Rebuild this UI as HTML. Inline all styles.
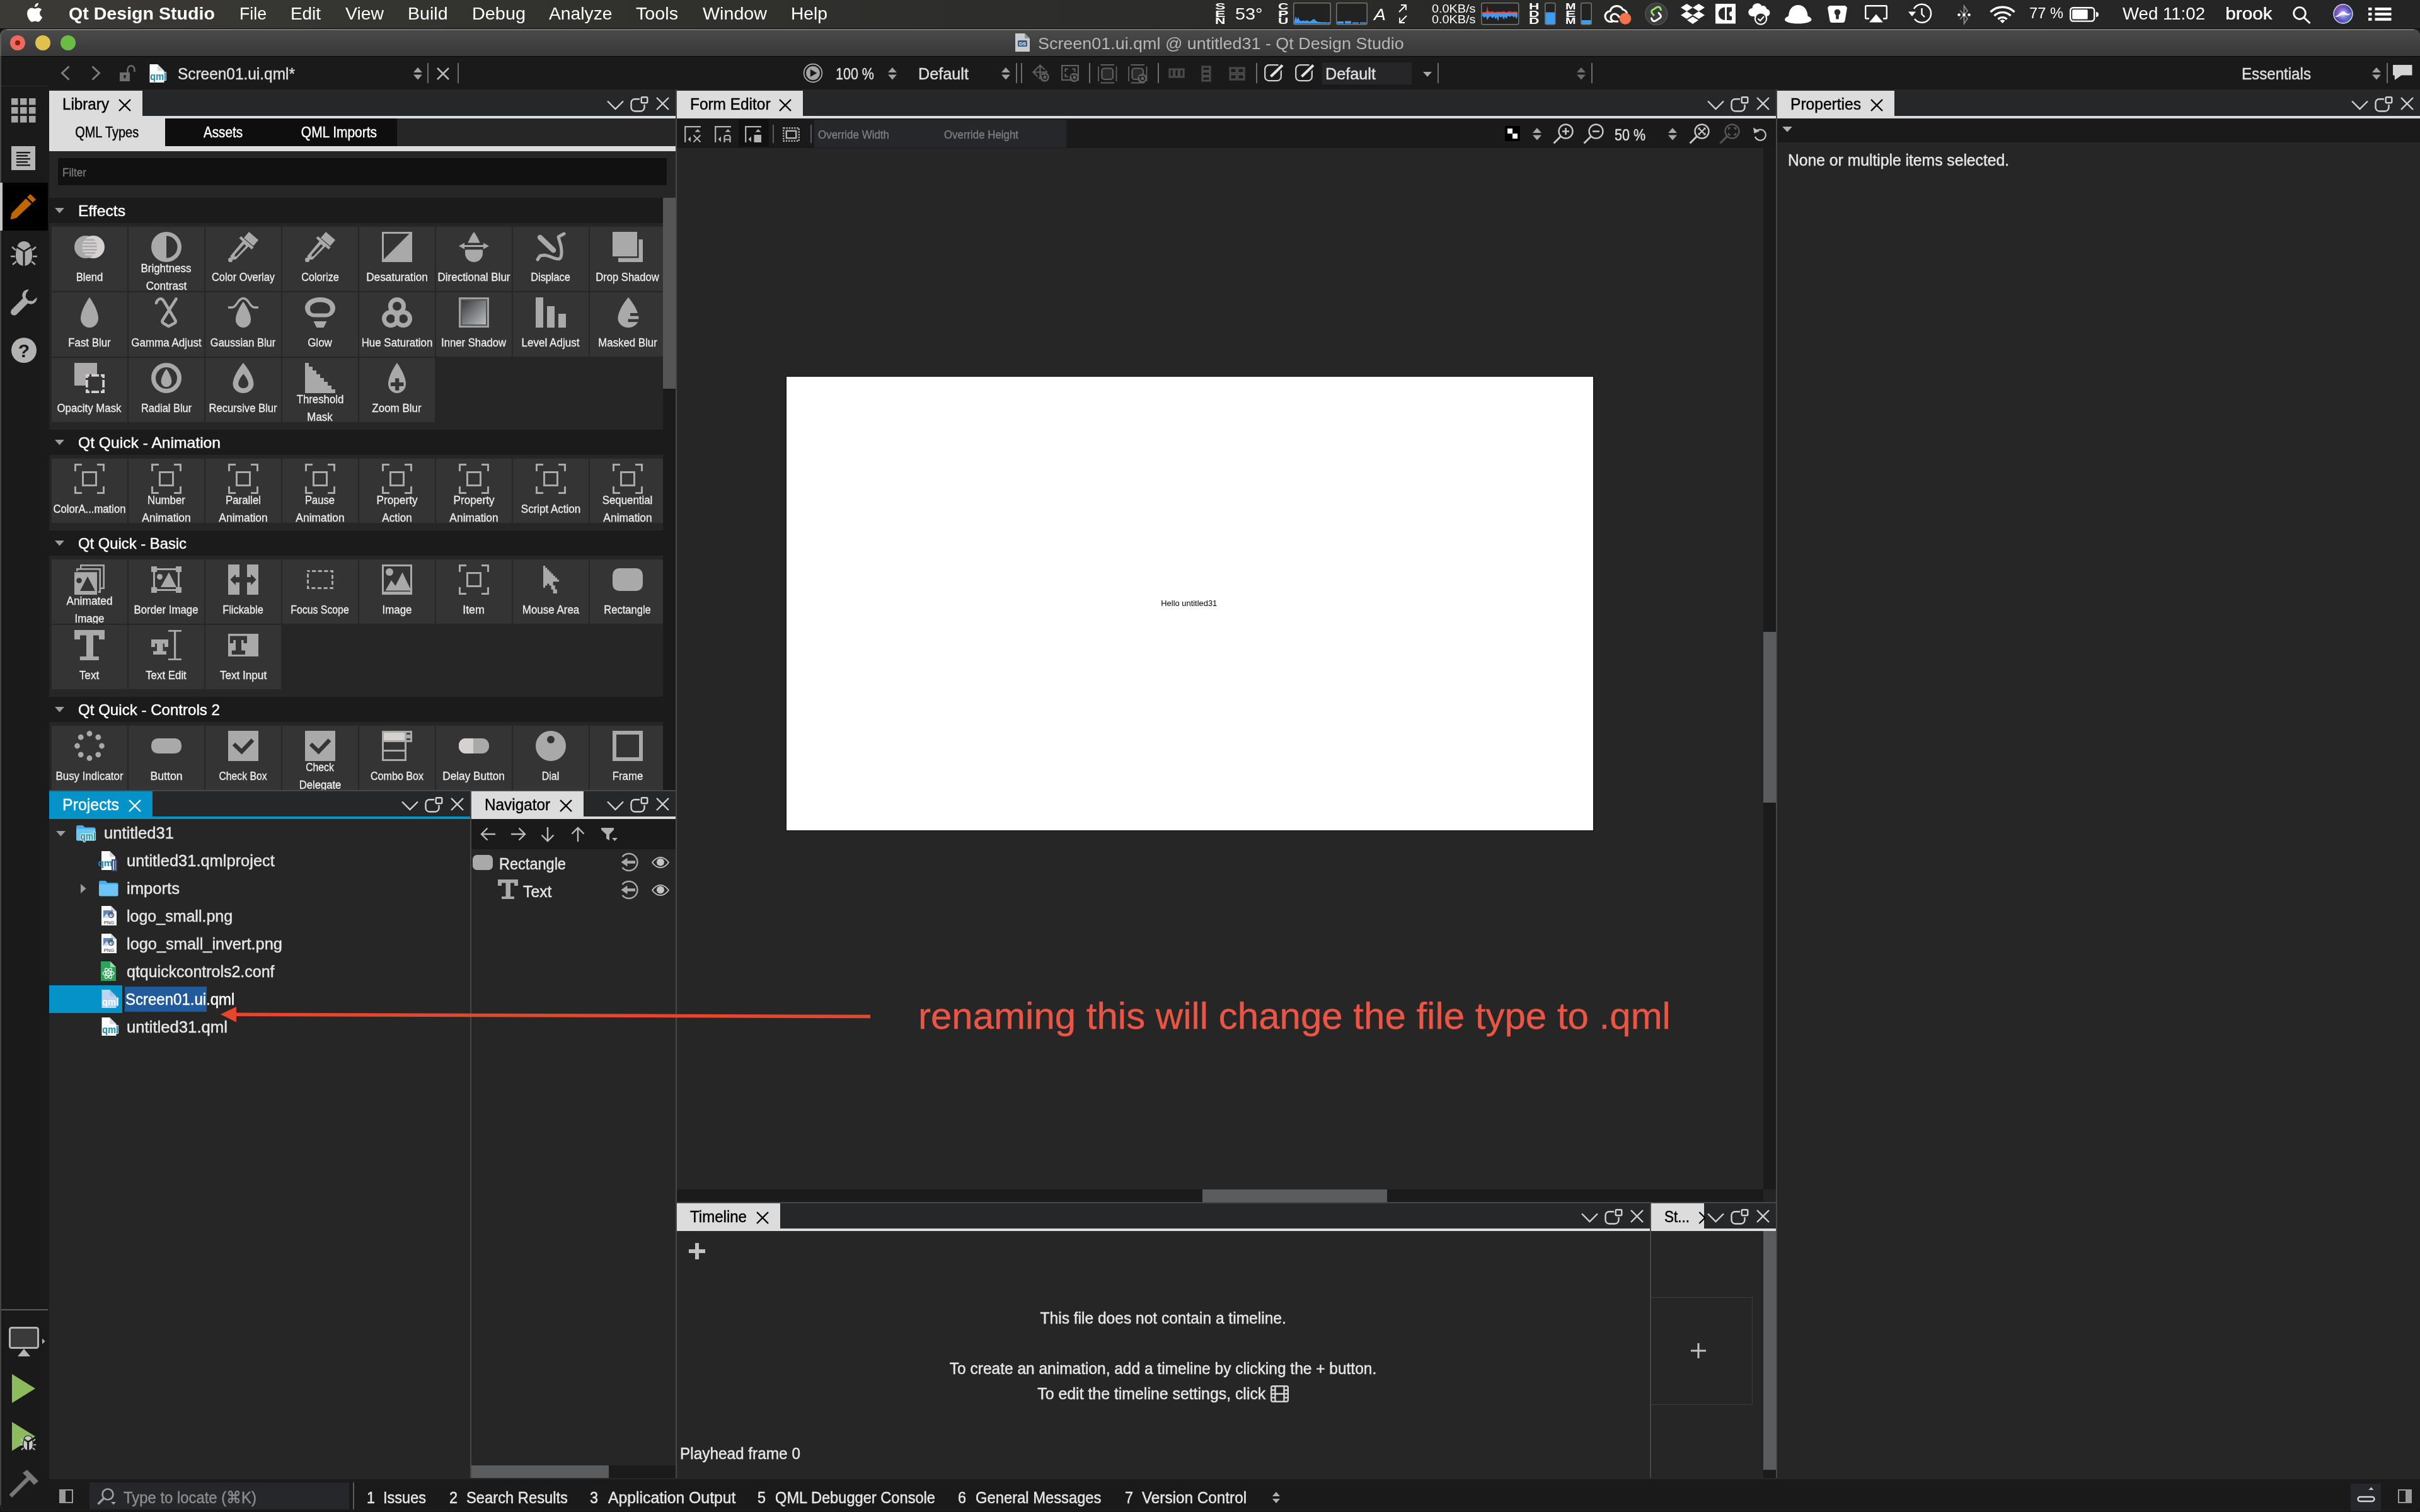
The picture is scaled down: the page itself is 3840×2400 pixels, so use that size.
<!DOCTYPE html>
<html><head><meta charset="utf-8"><title>Qt Design Studio</title>
<style>
html,body{margin:0;padding:0;background:#161616;}
body{width:3840px;height:2400px;position:relative;overflow:hidden;font-family:"Liberation Sans",sans-serif;}
div,span,svg{position:absolute;}
span{display:block;}
svg{overflow:visible;}
svg text{font-family:"Liberation Sans",sans-serif;}
</style></head>
<body>
<svg width="0" height="0" style="left:0;top:0"><defs><filter id="gb" x="-20%" y="-20%" width="140%" height="140%"><feGaussianBlur stdDeviation="0.700"/></filter></defs></svg>
<div style="left:0px;top:46px;width:3840px;height:2353px;background:#262626;border-radius:11px 11px 9px 9px;"></div>
<div style="left:0px;top:0px;width:3840px;height:46px;background:linear-gradient(90deg,#3b3a37 0%,#33332f 18%,#2d2e2b 40%,#2a2a29 60%,#272727 80%,#242424 100%);"></div>
<div style="left:0px;top:45px;width:3840px;height:1px;background:#0c0c0c;"></div>
<svg style="left:42px;top:3.6px;" width="27" height="32.6" viewBox="0 0 28 33"><path fill="#fff" d="M19.6,0 c0.2,1.8 -0.5,3.5 -1.5,4.8 c-1.1,1.3 -2.8,2.3 -4.5,2.1 c-0.2,-1.7 0.6,-3.5 1.6,-4.6 C16.3,1 18.2,0.1 19.6,0 Z M25.3,11.3 c-0.2,0.1 -3.4,2 -3.4,5.9 c0,4.6 4,6.2 4.1,6.2 c0,0.1 -0.6,2.2 -2.1,4.3 c-1.3,1.9 -2.6,3.7 -4.7,3.8 c-2,0 -2.7,-1.2 -5,-1.2 c-2.3,0 -3.1,1.2 -5,1.2 c-2,0.1 -3.5,-2 -4.8,-3.9 C1.7,23.800 -0.300,17 2.400,12.300 C3.800,10 6.200,8.500 8.800,8.500 c2,0 3.800,1.300 5,1.300 c1.200,0 3.400,-1.600 5.800,-1.400 C20.600,8.500 23.400,8.900 25.300,11.300 Z"/></svg>
<span style="top:8px;font-size:28px;line-height:28px;color:#fff;white-space:pre;font-weight:bold;left:109px;transform-origin:0 50%;transform:scaleX(1.021);">Qt Design Studio</span>
<span style="top:8.5px;font-size:27px;line-height:27px;color:#fff;white-space:pre;left:379.6px;transform-origin:0 50%;transform:scaleX(0.988);">File</span>
<span style="top:8.5px;font-size:27px;line-height:27px;color:#fff;white-space:pre;left:461px;transform-origin:0 50%;transform:scaleX(1.032);">Edit</span>
<span style="top:8.5px;font-size:27px;line-height:27px;color:#fff;white-space:pre;left:547.5px;transform-origin:0 50%;transform:scaleX(1.051);">View</span>
<span style="top:8.5px;font-size:27px;line-height:27px;color:#fff;white-space:pre;left:647px;transform-origin:0 50%;transform:scaleX(1.058);">Build</span>
<span style="top:8.5px;font-size:27px;line-height:27px;color:#fff;white-space:pre;left:748.5px;transform-origin:0 50%;transform:scaleX(1.068);">Debug</span>
<span style="top:8.5px;font-size:27px;line-height:27px;color:#fff;white-space:pre;left:871px;transform-origin:0 50%;transform:scaleX(1.046);">Analyze</span>
<span style="top:8.5px;font-size:27px;line-height:27px;color:#fff;white-space:pre;left:1009.4px;transform-origin:0 50%;transform:scaleX(1.063);">Tools</span>
<span style="top:8.5px;font-size:27px;line-height:27px;color:#fff;white-space:pre;left:1115px;transform-origin:0 50%;transform:scaleX(1.062);">Window</span>
<span style="top:8.5px;font-size:27px;line-height:27px;color:#fff;white-space:pre;left:1255px;transform-origin:0 50%;transform:scaleX(1.044);">Help</span>
<span style="top:2.5px;font-size:14px;line-height:14px;color:#ffffff;white-space:pre;font-weight:bold;left:1928px;transform-origin:0 50%;transform:scaleX(1.767);transform-origin:0 50%;">S</span>
<span style="top:14.5px;font-size:14px;line-height:14px;color:#ffffff;white-space:pre;font-weight:bold;left:1928px;transform-origin:0 50%;transform:scaleX(1.767);transform-origin:0 50%;">E</span>
<span style="top:26.2px;font-size:14px;line-height:14px;color:#ffffff;white-space:pre;font-weight:bold;left:1928px;transform-origin:0 50%;transform:scaleX(1.632);transform-origin:0 50%;">N</span>
<span style="top:10px;font-size:25px;line-height:25px;color:#ffffff;white-space:pre;left:1959.5px;transform-origin:0 50%;transform:scaleX(1.151);">53°</span>
<span style="top:2.5px;font-size:14px;line-height:14px;color:#ffffff;white-space:pre;font-weight:bold;left:2028px;transform-origin:0 50%;transform:scaleX(1.632);transform-origin:0 50%;">C</span>
<span style="top:14.5px;font-size:14px;line-height:14px;color:#ffffff;white-space:pre;font-weight:bold;left:2028px;transform-origin:0 50%;transform:scaleX(1.767);transform-origin:0 50%;">P</span>
<span style="top:26.2px;font-size:14px;line-height:14px;color:#ffffff;white-space:pre;font-weight:bold;left:2028px;transform-origin:0 50%;transform:scaleX(1.632);transform-origin:0 50%;">U</span>
<svg style="left:2052px;top:4px;" width="60" height="35.5" viewBox="0 0 60 35.5"><rect x="0.750" y="0.750" width="58.5" height="34" rx="2.500" fill="#222" stroke="#777" stroke-width="1.500"/><path d="M2,33.500 L2,29 L4,22 L6,27 L8,23 L10,28 L13,29.500 L16,28.500 L19,29.500 L22,28 L25,30 L28,29.500 L31,27 L33,26 L35,28 L38,30.500 L42,31 L46,31.500 L50,31 L54,31.800 L58,31 L58,33.500 Z" fill="#3f9cf0"/></svg>
<svg style="left:2120px;top:4px;" width="50" height="35.5" viewBox="0 0 50 35.5"><rect x="0.750" y="0.750" width="48.5" height="34" rx="2.500" fill="#222" stroke="#777" stroke-width="1.500"/><g fill="#3f9cf0"><rect x="2" y="30" width="10" height="3.500"/><rect x="14" y="29.500" width="10" height="4"/><rect x="26" y="31.500" width="10" height="2"/><rect x="38" y="31.500" width="10" height="2"/></g></svg>
<span style="top:9.5px;font-size:26px;line-height:26px;color:#ffffff;white-space:pre;font-style:italic;left:2180px;transform-origin:0 50%;transform:scaleX(1.095);">A</span>
<svg style="left:2219px;top:7px;" width="14" height="30" viewBox="0 0 14 30"><g fill="none" stroke="#fff" stroke-width="1.800"><path d="M1,12 L12,1 M4,1 H12 V9"/><path d="M13,18 L2,29 M2,21 V29 H10"/></g></svg>
<span style="top:5.75px;font-size:17.5px;line-height:17.5px;color:#ffffff;white-space:pre;left:2271.5px;transform-origin:0 50%;transform:scaleX(1.134);">0.0KB/s</span>
<span style="top:23.45px;font-size:17.5px;line-height:17.5px;color:#ffffff;white-space:pre;left:2271.5px;transform-origin:0 50%;transform:scaleX(1.134);">0.0KB/s</span>
<svg style="left:2350px;top:4px;" width="60.5" height="35.5" viewBox="0 0 60.5 35.5"><rect x="0.750" y="0.750" width="59.0" height="34" rx="2.500" fill="#222" stroke="#777" stroke-width="1.500"/><path d="M2,17 L2,15 L6,15.500 L9,14 L10,4 L11,13 L14,15 L18,14 L22,15.500 L27,14.500 L32,15 L36,14 L40,15.500 L45,14 L50,15 L54,14.500 L58,15 L58,17 Z" fill="#e8483c"/><path d="M2,17 L58,17 L58,22 L56,26 L54,21 L52,24 L49,20.500 L46,23 L43,21 L40,26 L38,22 L36,27.500 L34,22 L31,24 L29,21 L27,30 L25,23 L23,26.500 L21,22 L18,25 L15,21.500 L12,24 L10,28 L8,22 L5,24 L2,21 Z" fill="#3f9cf0"/></svg>
<span style="top:2.5px;font-size:14px;line-height:14px;color:#ffffff;white-space:pre;font-weight:bold;left:2426px;transform-origin:0 50%;transform:scaleX(1.632);transform-origin:0 50%;">H</span>
<span style="top:14.5px;font-size:14px;line-height:14px;color:#ffffff;white-space:pre;font-weight:bold;left:2426px;transform-origin:0 50%;transform:scaleX(1.632);transform-origin:0 50%;">D</span>
<span style="top:26.2px;font-size:14px;line-height:14px;color:#ffffff;white-space:pre;font-weight:bold;left:2426px;transform-origin:0 50%;transform:scaleX(1.632);transform-origin:0 50%;">D</span>
<svg style="left:2450.5px;top:4px;" width="17.5" height="35.5" viewBox="0 0 17.5 35.5"><rect x="0.750" y="0.750" width="16" height="34" rx="2.500" fill="#222" stroke="#777" stroke-width="1.500"/><rect x="1.500" y="15.500" width="14.500" height="18.500" fill="#3f9cf0"/></svg>
<span style="top:2.5px;font-size:14px;line-height:14px;color:#ffffff;white-space:pre;font-weight:bold;left:2483.5px;transform-origin:0 50%;transform:scaleX(1.415);transform-origin:0 50%;">M</span>
<span style="top:14.5px;font-size:14px;line-height:14px;color:#ffffff;white-space:pre;font-weight:bold;left:2483.5px;transform-origin:0 50%;transform:scaleX(1.767);transform-origin:0 50%;">E</span>
<span style="top:26.2px;font-size:14px;line-height:14px;color:#ffffff;white-space:pre;font-weight:bold;left:2483.5px;transform-origin:0 50%;transform:scaleX(1.415);transform-origin:0 50%;">M</span>
<svg style="left:2508px;top:4px;" width="18" height="35.5" viewBox="0 0 18 35.5"><rect x="0.750" y="0.750" width="16.500" height="34" rx="2.500" fill="#222" stroke="#777" stroke-width="1.500"/><rect x="1.500" y="28" width="15" height="6" fill="#3f9cf0"/></svg>
<svg style="left:2546px;top:9px;" width="46" height="30" viewBox="0 0 46 30"><g fill="none" stroke="#fff" stroke-width="3.200"><path d="M13,25.500 H10 a8.500,8.500 0 0 1 -1,-17 a11,11 0 0 1 20,-2.500 a9,9 0 0 1 7,9"/><path d="M22,25 H16 a6,6 0 0 1 0,-12 c4,0 6,3 8,6"/></g><circle cx="33" cy="20.500" r="9.300" fill="#f4734a"/></svg>
<svg style="left:2610px;top:3.5px;" width="36.5" height="36.5" viewBox="0 0 36.5 36.5"><circle cx="18.250" cy="18.250" r="17.500" fill="#3d3d3d" stroke="#5a5a5a" stroke-width="1.200"/><path d="M14,20 L11.500,17 C10,15 10.500,13 12,12 L19,7.500 C21,6.300 23.500,7 24.500,9 L25.500,11.500" fill="none" stroke="#8fe36a" stroke-width="3" stroke-linecap="round"/><path d="M22,16.500 L24.500,19.500 C26,21.500 25.500,23.500 24,24.500 L17,29 C15,30.200 12.500,29.500 11.500,27.500 L10.500,25" fill="none" stroke="#fff" stroke-width="3" stroke-linecap="round"/></svg>
<svg style="left:2667px;top:6px;" width="38" height="32" viewBox="0 0 38 32"><g fill="#fff"><path d="M9.500,0 L19,6 L9.500,12 L0,6 Z"/><path d="M28.500,0 L38,6 L28.500,12 L19,6 Z"/><path d="M9.500,12 L19,18 L9.500,24 L0,18 Z"/><path d="M28.500,12 L38,18 L28.500,24 L19,18 Z"/><path d="M19,20.500 L28,26 L19,32 L10,26 Z"/></g></svg>
<svg style="left:2722px;top:6px;" width="32" height="31.5" viewBox="0 0 32 31.5"><rect width="32" height="31.500" fill="#fff"/><path d="M15,5.500 V26 A10.250,10.250 0 0 1 15,5.500 Z" fill="#2b2b2b"/><path d="M18,5.500 H26 V12 A4,4 0 0 0 26,20 V26 H18 Z" fill="#2b2b2b"/></svg>
<svg style="left:2774px;top:4px;" width="37" height="36" viewBox="0 0 37 36"><path d="M8.500,22 H7 a6.500,6.500 0 0 1 -0.500,-13 a8,8 0 0 1 15,-3.500 a6,6 0 0 1 8,5 a5.800,5.800 0 0 1 1.500,11 Z" fill="#fff"/><circle cx="20" cy="25.500" r="9.200" fill="#2d2d2b" stroke="#fff" stroke-width="2.200"/><path d="M15.500,25.500 L19,29 L25,22" fill="none" stroke="#fff" stroke-width="2.200"/></svg>
<svg style="left:2832px;top:7.5px;" width="42.5" height="29.5" viewBox="0 0 42.5 29.5"><path d="M21.250,0 C31,0 36,8 36.500,17.500 C40,19 42.500,21 42.500,23 C42.500,27 33,29.500 21.250,29.500 C9.500,29.500 0,27 0,23 C0,21 2.500,19 6,17.500 C6.500,8 11.500,0 21.250,0 Z" fill="#fff"/></svg>
<svg style="left:2900px;top:9px;" width="31" height="27" viewBox="0 0 31 27"><path d="M3,0 H28 L31,3 L27.500,24 C27,26 25.500,27 24,27 H7 C5.500,27 4,26 3.500,24 L0,3 Z" fill="#fff"/><circle cx="15.500" cy="10.500" r="4.800" fill="#2b2b2b"/><rect x="13.200" y="12" width="4.600" height="9.500" rx="1.500" fill="#2b2b2b"/></svg>
<svg style="left:2958.5px;top:8px;" width="36" height="28" viewBox="0 0 36 28"><path d="M7,21.500 H2.500 a1.300,1.300 0 0 1 -1.300,-1.300 V2.500 a1.300,1.300 0 0 1 1.300,-1.300 H33.500 a1.300,1.300 0 0 1 1.300,1.300 V20.200 a1.300,1.300 0 0 1 -1.300,1.300 H29" fill="none" stroke="#fff" stroke-width="2.400"/><path d="M18,14.500 L29,27.500 H7 Z" fill="#fff"/></svg>
<svg style="left:3028px;top:6px;" width="38" height="32" viewBox="0 0 38 32"><path d="M8.500,9 A14.500,14.500 0 1 1 9.500,25" fill="none" stroke="#fff" stroke-width="2.400" transform="translate(0.500,-1)"/><path d="M0,12.500 H12 L6,20 Z" fill="#fff"/><path d="M21.500,7 V16.500 L26,21" fill="none" stroke="#fff" stroke-width="2.400"/></svg>
<svg style="left:3105px;top:7.5px;" width="24" height="31" viewBox="0 0 24 31"><path d="M5,8.500 L17,21.500 L11.500,29.500 V1.500 L17,9.500 L5,22.500" fill="none" stroke="#8a8a8a" stroke-width="1.800"/><circle cx="3.500" cy="15.500" r="2.300" fill="#fff"/><circle cx="11.500" cy="15.500" r="2.300" fill="#fff"/><circle cx="19.500" cy="15.500" r="2.300" fill="#fff"/></svg>
<svg style="left:3156.5px;top:7.5px;" width="41" height="29" viewBox="0 0 41 29"><g fill="none" stroke="#fff" stroke-width="3.400"><path d="M1.500,11 A27,27 0 0 1 39.500,11"/><path d="M7.500,17 A18.500,18.500 0 0 1 33.500,17"/><path d="M13.500,22.500 A10,10 0 0 1 27.500,22.500"/></g><path d="M20.500,29 L16.500,24.800 A5.800,5.800 0 0 1 24.500,24.800 Z" fill="#fff"/></svg>
<span style="top:9.75px;font-size:23.5px;line-height:23.5px;color:#ffffff;white-space:pre;left:3220px;transform-origin:0 50%;transform:scaleX(1.008);">77 %</span>
<svg style="left:3284px;top:10.5px;" width="46" height="24" viewBox="0 0 46 24"><rect x="1.200" y="1.200" width="38" height="21.400" rx="4.500" fill="none" stroke="#fff" stroke-width="2.400"/><rect x="4.200" y="4.200" width="24.500" height="15.400" rx="1.500" fill="#fff"/><path d="M42,8 a4,4 0 0 1 0,8 Z" fill="#fff"/></svg>
<span style="top:8.25px;font-size:27.5px;line-height:27.5px;color:#ffffff;white-space:pre;left:3368px;transform-origin:0 50%;transform:scaleX(1.004);">Wed 11:02</span>
<span style="top:8.25px;font-size:27.5px;line-height:27.5px;color:#ffffff;white-space:pre;left:3531px;transform-origin:0 50%;transform:scaleX(1.083);text-shadow:0.400px 0 0 #fff;">brook</span>
<svg style="left:3638px;top:9.5px;" width="29" height="28" viewBox="0 0 29 28"><circle cx="11" cy="11" r="9.300" fill="none" stroke="#fff" stroke-width="2.800"/><path d="M17.500,17.500 L27.500,27" stroke="#fff" stroke-width="3" fill="none"/></svg>
<svg style="left:3702px;top:6px;" width="32" height="32" viewBox="0 0 32 32"><defs><radialGradient id="sg" cx="0.500" cy="0.500" r="0.500"><stop offset="0" stop-color="#f4f6ff"/><stop offset="0.350" stop-color="#9b8fe8"/><stop offset="0.700" stop-color="#5a4fb8"/><stop offset="1" stop-color="#3b3a8a"/></radialGradient><linearGradient id="sg2" x1="0" y1="0" x2="1" y2="1"><stop offset="0" stop-color="#e0559f" stop-opacity="0.900"/><stop offset="0.500" stop-color="#6a5fd0" stop-opacity="0"/><stop offset="1" stop-color="#34c9d8" stop-opacity="0.900"/></linearGradient></defs><circle cx="16" cy="16" r="15.500" fill="url(#sg)"/><circle cx="16" cy="16" r="15.500" fill="url(#sg2)"/><path d="M3,20 C10,18 12,12 16,12 C20,12 22,19 29,14 C24,22 20,17 16,17 C12,17 9,23 3,20 Z" fill="#fff" opacity="0.850"/><circle cx="16" cy="16" r="15" fill="none" stroke="#d8d8e8" stroke-width="1.400"/></svg>
<svg style="left:3757.5px;top:11.5px;" width="37" height="21" viewBox="0 0 37 21"><g fill="#fff"><rect x="0" y="0" width="5.500" height="4.400"/><rect x="10.500" y="0" width="26" height="4.400"/><rect x="0" y="8.200" width="5.500" height="4.400"/><rect x="10.500" y="8.200" width="26" height="4.400"/><rect x="0" y="16.400" width="5.500" height="4.400"/><rect x="10.500" y="16.400" width="26" height="4.400"/></g></svg>
<div style="left:0px;top:46px;width:3840px;height:44px;background:#5c5c5c;border-radius:11px 11px 0 0;"></div>
<div style="left:2px;top:46px;width:3838px;height:43px;background:linear-gradient(180deg,#4a4a4a 0%,#424242 45%,#383838 100%);border-radius:10px 10px 0 0;"></div>
<div style="left:11px;top:46px;width:3819px;height:1.5px;background:#767676;"></div>
<div style="left:2px;top:89px;width:3838px;height:1.4px;background:#050505;"></div>
<div style="left:16px;top:55.5px;width:24px;height:24px;border-radius:50%;background:#ee6a5e;"></div>
<div style="left:24px;top:63.5px;width:8px;height:8px;border-radius:50%;background:#8e1b12;"></div>
<div style="left:56px;top:55.5px;width:24px;height:24px;border-radius:50%;background:#e2c04d;"></div>
<div style="left:96px;top:55.5px;width:24px;height:24px;border-radius:50%;background:#69bd45;"></div>
<svg style="left:1611px;top:53px;" width="23" height="29" viewBox="0 0 23 29"><path d="M0,0 H15 L23,8 V29 H0 Z" fill="#c9cbcf"/><path d="M15,0 V8 H23 Z" fill="#8f9297"/><rect x="4" y="11" width="15" height="10" rx="1.5" fill="#3a5f86"/><text x="11.500" y="19" font-size="8" font-weight="bold" text-anchor="middle" fill="#dfe6ee" font-family="Liberation Sans">DS</text></svg>
<span style="top:56px;font-size:26px;line-height:26px;color:#b6b6b6;white-space:pre;left:1647px;transform-origin:0 50%;transform:scaleX(1.035);">Screen01.ui.qml @ untitled31 - Qt Design Studio</span>
<div style="left:2px;top:90.4px;width:3838px;height:51.6px;background:#1a1a1a;"></div>
<svg style="left:97px;top:104px;" width="14" height="24" viewBox="0 0 14 24"><path d="M12.5,1.5 L1.5,12.0 L12.5,22.5" fill="none" stroke="#7d7d7d" stroke-width="3"/></svg>
<svg style="left:145px;top:104px;" width="14" height="24" viewBox="0 0 14 24"><path d="M1.5,1.5 L12.5,12.0 L1.5,22.5" fill="none" stroke="#7d7d7d" stroke-width="3"/></svg>
<svg style="left:190px;top:103px;" width="26" height="26" viewBox="0 0 26 26"><rect x="0" y="12" width="16" height="14" fill="#6f6f6f"/><path d="M12.5,12 V7 a5.5,5.5 0 0 1 11,0 V11" fill="none" stroke="#6f6f6f" stroke-width="2.4"/><circle cx="8" cy="18" r="2" fill="#1a1a1a"/><rect x="7.200" y="18" width="1.600" height="4" fill="#1a1a1a"/></svg>
<svg style="left:237px;top:101.5px;" width="30" height="34" viewBox="0 0 30 34"><path d="M0.500,0 H13 L23.500,10.500 V29 H0.500 Z" fill="#fdfdfd"/><path d="M13,0 L23.500,10.500 H13 Z" fill="#d5d9de"/><text x="14" y="25.300" font-size="17" font-weight="bold" text-anchor="middle" fill="#1b8ca8" stroke="#ffffff" stroke-width="1.800" paint-order="stroke" stroke-linejoin="round" font-family="Liberation Sans" textLength="26" lengthAdjust="spacingAndGlyphs">qml</text></svg>
<span style="top:104px;font-size:26px;line-height:26px;color:#dedede;white-space:pre;-webkit-text-stroke:0.462px #dedede;left:282px;transform-origin:0 50%;transform:scaleX(0.939);">Screen01.ui.qml*</span>
<svg style="left:656px;top:107.2px;" width="14" height="19.6" viewBox="0 0 14 19.6"><path d="M0,8 L7.0,0 L14,8 Z M0,11.6 L7.0,19.6 L14,11.6 Z" fill="#a0a0a0"/></svg>
<div style="left:678px;top:100px;width:2px;height:32px;background:#6e6e6e;"></div>
<svg style="left:693px;top:107px;" width="20" height="20" viewBox="0 0 20 20"><path d="M1,1 L19,19 M19,1 L1,19" stroke="#b8b8b8" stroke-width="2.6" fill="none"/></svg>
<div style="left:726px;top:100px;width:2px;height:32px;background:#6e6e6e;"></div>
<svg style="left:1274px;top:99.8px;" width="32" height="32" viewBox="0 0 32 32"><circle cx="16" cy="16" r="14.400" fill="none" stroke="#b2b2b2" stroke-width="1.700"/><circle cx="16" cy="16" r="10.900" fill="#a4a4a4"/><path d="M11.800,10 L22.400,16 L11.800,22 Z" fill="#1a1a1a"/></svg>
<span style="top:104px;font-size:26px;line-height:26px;color:#dedede;white-space:pre;-webkit-text-stroke:0.462px #dedede;left:1326px;transform-origin:0 50%;transform:scaleX(0.827);">100 %</span>
<svg style="left:1409px;top:107.2px;" width="14" height="19.6" viewBox="0 0 14 19.6"><path d="M0,8 L7.0,0 L14,8 Z M0,11.6 L7.0,19.6 L14,11.6 Z" fill="#a0a0a0"/></svg>
<span style="top:104px;font-size:26px;line-height:26px;color:#dedede;white-space:pre;-webkit-text-stroke:0.462px #dedede;left:1457px;transform-origin:0 50%;transform:scaleX(0.971);">Default</span>
<svg style="left:1589px;top:107.2px;" width="14" height="19.6" viewBox="0 0 14 19.6"><path d="M0,8 L7.0,0 L14,8 Z M0,11.6 L7.0,19.6 L14,11.6 Z" fill="#a0a0a0"/></svg>
<div style="left:1612px;top:100px;width:2px;height:32px;background:#6e6e6e;"></div>
<div style="left:1620px;top:100px;width:2px;height:32px;background:#6e6e6e;"></div>
<svg style="left:1637px;top:101px;" width="30" height="30" viewBox="0 0 30 30"><g fill="none" stroke="#606060" stroke-width="2.200"><path d="M13.500,24 V2.500 M8,8 L13.500,2.500 L19,8 M25,13.500 H2.500 M8,8 L2.500,13.500 L8,19"/><path d="M19,8 L24.500,13.500 M8,19 L13.500,24.500" stroke-dasharray="2.500 2"/></g><circle cx="20.5" cy="21.5" r="7.300" fill="#606060"/><path d="M17.3,21.0 A3.600,3.600 0 1 0 20.5,17.9" fill="none" stroke="#1a1a1a" stroke-width="1.700"/><path d="M14.9,18.1 L20.3,17.7 L17.5,22.7 Z" fill="#1a1a1a"/></svg>
<svg style="left:1684px;top:103px;" width="30" height="30" viewBox="0 0 30 30"><g fill="none" stroke="#606060" stroke-width="2.200"><rect x="1.100" y="1.100" width="25.800" height="22.800"/><path d="M6.500,11 V6.500 H11 M17,6.500 H21.500 V11 M6.500,14 V18.500 H11"/></g><circle cx="20.5" cy="20" r="7.300" fill="#606060"/><path d="M17.3,19.5 A3.600,3.600 0 1 0 20.5,16.4" fill="none" stroke="#1a1a1a" stroke-width="1.700"/><path d="M14.9,16.6 L20.3,16.2 L17.5,21.2 Z" fill="#1a1a1a"/></svg>
<div style="left:1728px;top:100px;width:2px;height:32px;background:#6e6e6e;"></div>
<svg style="left:1742px;top:101.5px;" width="31" height="31" viewBox="0 0 31 31"><g fill="none" stroke="#606060" stroke-width="1.800"><path d="M4.500,1 H26 M4.500,29.500 H26 M1,3.500 V27 M29.500,3.500 V27"/><rect x="6.500" y="6.500" width="17.500" height="17.500" rx="4" fill="#2a2a2a" stroke-width="2.200"/></g></svg>
<svg style="left:1790px;top:101.5px;" width="31" height="31" viewBox="0 0 31 31"><g fill="none" stroke="#606060" stroke-width="1.800"><path d="M4.500,1 H26 M4.500,29.500 H26 M1,3.500 V27 M29.500,3.500 V27"/><rect x="6.500" y="6.500" width="17.500" height="17.500" rx="4" fill="#2a2a2a" stroke-width="2.200"/></g><circle cx="22.5" cy="22.5" r="7.300" fill="#606060"/><path d="M19.3,22.0 A3.600,3.600 0 1 0 22.5,18.9" fill="none" stroke="#1a1a1a" stroke-width="1.700"/><path d="M16.9,19.1 L22.3,18.7 L19.5,23.7 Z" fill="#1a1a1a"/></svg>
<div style="left:1837px;top:100px;width:2px;height:32px;background:#6e6e6e;"></div>
<svg style="left:1854px;top:108px;" width="26" height="16" viewBox="0 0 26 16"><rect width="26" height="16" fill="#3d3d3d"/><g fill="#1c1c1c" stroke="#565656" stroke-width="1.300"><rect x="2.600" y="2.600" width="5.200" height="10.800"/><rect x="10.400" y="2.600" width="5.200" height="10.800"/><rect x="18.200" y="2.600" width="5.200" height="10.800"/></g></svg>
<svg style="left:1906px;top:104px;" width="16" height="26" viewBox="0 0 16 26"><rect width="16" height="26" fill="#3d3d3d"/><g fill="#1c1c1c" stroke="#565656" stroke-width="1.300"><rect x="2.600" y="2.600" width="10.800" height="5.200"/><rect x="2.600" y="10.400" width="10.800" height="5.200"/><rect x="2.600" y="18.200" width="10.800" height="5.200"/></g></svg>
<svg style="left:1950px;top:106px;" width="26" height="22" viewBox="0 0 26 22"><rect width="26" height="22" fill="#3d3d3d"/><g fill="#1c1c1c" stroke="#565656" stroke-width="1.300"><rect x="2.600" y="2.600" width="8.800" height="6.800"/><rect x="14.600" y="2.600" width="8.800" height="6.800"/><rect x="2.600" y="12.600" width="8.800" height="6.800"/><rect x="14.600" y="12.600" width="8.800" height="6.800"/></g></svg>
<div style="left:1993px;top:100px;width:2px;height:32px;background:#6e6e6e;"></div>
<svg style="left:2006px;top:100px;" width="31" height="30" viewBox="0 0 31 30"><rect x="1.200" y="3.200" width="25.600" height="25" rx="6.500" fill="none" stroke="#cdcdcd" stroke-width="2.300"/><path d="M10.500,21.500 L29.500,3" stroke="#1a1a1a" stroke-width="9" fill="none"/><path d="M10.500,21.500 L29,3.500" stroke="#e2e2e2" stroke-width="4.200" fill="none"/></svg>
<svg style="left:2054.5px;top:100px;" width="31" height="30" viewBox="0 0 31 30"><rect x="1.200" y="3.200" width="25.600" height="25" rx="6.500" fill="none" stroke="#cdcdcd" stroke-width="2.300"/><path d="M10.500,21.500 L29.500,3" stroke="#1a1a1a" stroke-width="9" fill="none"/><path d="M10.500,21.500 L29,3.500" stroke="#e2e2e2" stroke-width="4.200" fill="none"/></svg>
<div style="left:2098px;top:99px;width:142px;height:35px;background:#262628;"></div>
<span style="top:104px;font-size:26px;line-height:26px;color:#dedede;white-space:pre;-webkit-text-stroke:0.462px #dedede;left:2103px;transform-origin:0 50%;transform:scaleX(0.971);">Default</span>
<svg style="left:2258px;top:114px;" width="14" height="8" viewBox="0 0 14 8"><path d="M0,0 H14 L7,8 Z" fill="#a8a8a8"/></svg>
<div style="left:2281px;top:100px;width:2px;height:32px;background:#6e6e6e;"></div>
<svg style="left:2502px;top:107.2px;" width="14" height="19.6" viewBox="0 0 14 19.6"><path d="M0,8 L7.0,0 L14,8 Z M0,11.6 L7.0,19.6 L14,11.6 Z" fill="#6c6c6c"/></svg>
<div style="left:2525px;top:100px;width:2px;height:32px;background:#6e6e6e;"></div>
<span style="top:104px;font-size:26px;line-height:26px;color:#dedede;white-space:pre;-webkit-text-stroke:0.462px #dedede;left:3557px;transform-origin:0 50%;transform:scaleX(0.928);">Essentials</span>
<svg style="left:3764px;top:107.2px;" width="14" height="19.6" viewBox="0 0 14 19.6"><path d="M0,8 L7.0,0 L14,8 Z M0,11.6 L7.0,19.6 L14,11.6 Z" fill="#a0a0a0"/></svg>
<div style="left:3787px;top:100px;width:2px;height:32px;background:#6e6e6e;"></div>
<svg style="left:3797px;top:103px;" width="30.5" height="24" viewBox="0 0 30.5 24"><path d="M0,0 H30.500 V16.500 H13.500 L3,24 L2.500,16.500 H0 Z" fill="#d4d4d4"/></svg>
<div style="left:0px;top:89px;width:2px;height:2300px;background:#444444;"></div>
<div style="left:2px;top:90.4px;width:76px;height:2308.6px;background:#1a1a1a;border-radius:0 0 0 9px;"></div>
<div style="left:2px;top:136px;width:74px;height:1px;background:#2c2c2c;"></div>
<svg style="left:18px;top:156px;" width="39" height="39" viewBox="0 0 39 39"><rect x="0" y="0" width="10.500" height="10.500" fill="#a5a5a5"/><rect x="14" y="0" width="10.500" height="10.500" fill="#a5a5a5"/><rect x="28" y="0" width="10.500" height="10.500" fill="#a5a5a5"/><rect x="0" y="14" width="10.500" height="10.500" fill="#a5a5a5"/><rect x="14" y="14" width="10.500" height="10.500" fill="#a5a5a5"/><rect x="28" y="14" width="10.500" height="10.500" fill="#a5a5a5"/><rect x="0" y="28" width="10.500" height="10.500" fill="#a5a5a5"/><rect x="14" y="28" width="10.500" height="10.500" fill="#a5a5a5"/><rect x="28" y="28" width="10.500" height="10.500" fill="#a5a5a5"/></svg>
<svg style="left:18px;top:232px;" width="38" height="38" viewBox="0 0 38 38"><rect width="38" height="38" fill="#b5b5b5"/><g fill="#1d1d1d"><rect x="8" y="9" width="22" height="2.400"/><rect x="8" y="14" width="18" height="2.400"/><rect x="8" y="19" width="22" height="2.400"/><rect x="8" y="24" width="18" height="2.400"/><rect x="8" y="29" width="22" height="2.400"/></g></svg>
<div style="left:4px;top:290px;width:72px;height:76px;background:#000;"></div>
<div style="left:0px;top:290px;width:4px;height:76px;background:#c6c6c6;"></div>
<svg style="left:16px;top:307px;" width="42" height="42" viewBox="0 0 42 42"><path d="M32,1 L41,9.500 L36,14.500 L27,6 Z M25,8 L34,16.500 L10,39 L0.500,41.500 L2.500,31.500 Z" fill="#be6600"/></svg>
<svg style="left:17px;top:383px;" width="42" height="40" viewBox="0 0 42 40"><g fill="#aaaaaa"><path d="M21,0 C27,0 30.500,4 31.500,8 L21,14.500 L10.500,8 C11.500,4 15,0 21,0 Z"/><path d="M9.500,10.500 L19.500,16.500 V39 C12,38 8,31 8,23 C8,18 8.500,14 9.500,10.500 Z"/><path d="M32.500,10.500 L22.500,16.500 V39 C30,38 34,31 34,23 C34,18 33.500,14 32.500,10.500 Z"/></g><g stroke="#aaaaaa" stroke-width="2.600" fill="none"><path d="M8,14 L2,9 M34,14 L40,9 M7,24 H0 M35,24 H42 M9,32 L3,37 M33,32 L39,37"/></g></svg>
<svg style="left:17px;top:459px;" width="42" height="42" viewBox="0 0 42 42"><path d="M29,0.500 C24,0 19.500,3 18.500,8 C18,10.500 18.500,12.500 19.500,14.500 L2,32 C-0.500,34.500 -0.300,38 1.500,40 C3.500,42 7,42.300 9.500,40 L27,22.500 C29,23.500 31.500,24 34,23.500 C39,22.500 42,17.500 41.500,13 L34.500,19 L27.500,18 L23.500,12.500 L24.500,6.500 Z" fill="#aaaaaa"/></svg>
<svg style="left:18px;top:536px;" width="40" height="40" viewBox="0 0 40 40"><circle cx="20" cy="20" r="20" fill="#b2b2b2"/><text x="20" y="31" font-size="30" font-weight="bold" text-anchor="middle" fill="#1a1a1a" font-family="Liberation Sans">?</text></svg>
<div style="left:2px;top:2078px;width:74px;height:2px;background:#5a5a5a;"></div>
<svg style="left:14px;top:2106px;" width="58" height="48" viewBox="0 0 58 48"><rect x="1.500" y="1.500" width="45" height="32" rx="3" fill="#3a3a3a" stroke="#b4b4b4" stroke-width="3"/><path d="M24,35 L34,47 H14 Z" fill="#b4b4b4"/><path d="M53,18.500 L57.500,23 L53,27.500 Z" fill="#b4b4b4"/></svg>
<svg style="left:19px;top:2181px;" width="38" height="46" viewBox="0 0 38 46"><path d="M0,0 L37,23 L0,46 Z" fill="#8cbb5e"/></svg>
<svg style="left:19px;top:2257px;" width="40" height="48" viewBox="0 0 40 48"><path d="M0,0 L37,23 L0,46 Z" fill="#8cbb5e"/><g transform="translate(13,22) scale(0.600)"><g fill="#c8c8c8" stroke="#1a1a1a" stroke-width="2"><path d="M21,0 C27,0 30.500,4 31.500,8 L21,14.500 L10.500,8 C11.500,4 15,0 21,0 Z"/><path d="M9.500,10.500 L19.500,16.500 V39 C12,38 8,31 8,23 C8,18 8.500,14 9.500,10.500 Z"/><path d="M32.500,10.500 L22.500,16.500 V39 C30,38 34,31 34,23 C34,18 33.500,14 32.500,10.500 Z"/></g><g stroke="#c8c8c8" stroke-width="3" fill="none"><path d="M8,14 L2,9 M34,14 L40,9 M7,24 H0 M35,24 H42 M9,32 L3,37 M33,32 L39,37"/></g></g></svg>
<svg style="left:14px;top:2332px;" width="48" height="46" viewBox="0 0 48 46"><path d="M29,1 L47,19 L40,25 L33,17 L5,45 L0.500,40.500 L28.500,12.500 L22,6 Z" fill="#787878"/></svg>
<div style="left:78px;top:142px;width:994px;height:42px;background:#262728;"></div>
<div style="left:78px;top:144px;width:148px;height:40px;background:#dcdcdc;"></div>
<div style="left:78px;top:184px;width:994px;height:4px;background:#dcdcdc;"></div>
<span style="top:152px;font-size:26px;line-height:26px;color:#000;white-space:pre;-webkit-text-stroke:0.462px #000;left:98.5px;transform-origin:0 50%;transform:scaleX(0.931);">Library</span>
<svg style="left:188px;top:157px;" width="20" height="20" viewBox="0 0 20 20"><path d="M1,1 L19,19 M19,1 L1,19" stroke="#000" stroke-width="2.4" fill="none"/></svg>
<svg style="left:963px;top:158.5px;" width="27" height="16" viewBox="0 0 27 16"><path d="M1,1.500 L13.500,14 L26,1.500" fill="none" stroke="#d2d2d2" stroke-width="2.400"/></svg>
<svg style="left:1000px;top:152.5px;" width="29" height="25" viewBox="0 0 29 25"><path d="M15,4.200 H7.500 a6,6 0 0 0 -6,6 V17.500 a6,6 0 0 0 6,6 H16.500 a6,6 0 0 0 6,-6 V13" fill="none" stroke="#d2d2d2" stroke-width="2.400"/><rect x="17.700" y="1.200" width="9.600" height="9" rx="1.500" fill="none" stroke="#d2d2d2" stroke-width="2.400"/></svg>
<svg style="left:1041px;top:154.3px;" width="21" height="21" viewBox="0 0 21 21"><path d="M1,1 L20,20 M20,1 L1,20" stroke="#d2d2d2" stroke-width="2.4" fill="none"/></svg>
<div style="left:78px;top:188px;width:184px;height:52px;background:#dcdcdc;"></div>
<div style="left:262px;top:188px;width:368px;height:44px;background:#0e0e0e;"></div>
<div style="left:78px;top:232px;width:994px;height:8px;background:#dcdcdc;"></div>
<span style="top:198px;font-size:24px;line-height:24px;color:#000;white-space:pre;-webkit-text-stroke:0.427px #000;left:89.309px;width:161.383px;text-align:center;transform-origin:50% 50%;transform:scaleX(0.832);">QML Types</span>
<span style="top:198px;font-size:24px;line-height:24px;color:#fff;white-space:pre;-webkit-text-stroke:0.427px #fff;left:297.988px;width:112.023px;text-align:center;transform-origin:50% 50%;transform:scaleX(0.861);">Assets</span>
<span style="top:198px;font-size:24px;line-height:24px;color:#fff;white-space:pre;-webkit-text-stroke:0.427px #fff;left:449.1px;width:177.801px;text-align:center;transform-origin:50% 50%;transform:scaleX(0.871);">QML Imports</span>
<div style="left:92px;top:251px;width:966px;height:43px;background:#111111;"></div>
<span style="top:265px;font-size:18px;line-height:18px;color:#7b7b7b;white-space:pre;-webkit-text-stroke:0.32px #7b7b7b;left:98.5px;transform-origin:0 50%;transform:scaleX(0.95);">Filter</span>
<div style="left:1052px;top:314px;width:20px;height:940px;background:#1b1b1b;"></div>
<div style="left:1052px;top:314px;width:20px;height:303px;background:#555555;"></div>
<div style="left:78px;top:314px;width:974px;height:40px;background:#1b1b1b;"></div>
<svg style="left:86.5px;top:330px;" width="15" height="8.5" viewBox="0 0 15 8.5"><path d="M0,0 H15 L7.500,8.500 Z" fill="#9c9c9c"/></svg>
<span style="top:323px;font-size:24px;line-height:24px;color:#fff;white-space:pre;-webkit-text-stroke:0.427px #fff;left:123.5px;transform-origin:0 50%;transform:scaleX(1.028);">Effects</span>
<div style="left:82px;top:360px;width:120px;height:102px;background:#343434;overflow:hidden;">
<svg style="left:36px;top:8px" width="48" height="48" viewBox="0 0 48 48"><circle cx="18" cy="24" r="18" fill="#a9a9a9"/><circle cx="30" cy="24" r="18" fill="#d5d1d0"/><clipPath id="bl"><circle cx="18" cy="24" r="18"/></clipPath><g clip-path="url(#bl)" fill="#a9a9a9"><rect x="12" y="11.5" width="26" height="2.6"/><rect x="12" y="16.7" width="26" height="2.6"/><rect x="12" y="21.9" width="26" height="2.6"/><rect x="12" y="27.1" width="26" height="2.6"/><rect x="12" y="32.3" width="26" height="2.6"/><rect x="12" y="37.5" width="26" height="2.6"/></g></svg>
<span style="top:70.5px;font-size:18px;line-height:18px;color:#ececec;white-space:pre;-webkit-text-stroke:0.32px #ececec;left:16.979px;width:86.043px;text-align:center;transform-origin:50% 50%;transform:scaleX(0.927);">Blend</span>
</div>
<div style="left:204px;top:360px;width:120px;height:102px;background:#343434;overflow:hidden;">
<svg style="left:36px;top:8px" width="48" height="48" viewBox="0 0 48 48"><circle cx="24" cy="24" r="24" fill="#a9a9a9"/><path d="M24,6.5 A17.5,17.5 0 0 1 24,41.5 Z" fill="#343434"/></svg>
<span style="top:57px;font-size:18px;line-height:18px;color:#ececec;white-space:pre;-webkit-text-stroke:0.32px #ececec;left:-2.525px;width:125.051px;text-align:center;transform-origin:50% 50%;transform:scaleX(0.942);">Brightness</span>
<span style="top:85px;font-size:18px;line-height:18px;color:#ececec;white-space:pre;-webkit-text-stroke:0.32px #ececec;left:5.984px;width:108.031px;text-align:center;transform-origin:50% 50%;transform:scaleX(0.95);">Contrast</span>
</div>
<div style="left:326px;top:360px;width:120px;height:102px;background:#343434;overflow:hidden;">
<svg style="left:36px;top:8px" width="48" height="48" viewBox="0 0 48 48"><g fill="#a9a9a9"><path d="M33,0 L48,13 L40,22.5 L25,9.5 Z"/><path d="M18.5,5.5 L21.5,2.5 L41.5,20 L38.5,23.5 Z" transform="translate(-1,4.5)"/><path d="M24.5,13 L34,21.5 L12,44 L5,44 L3.5,38.5 Z M25.5,19.5 L11,35.5 L10,39.5 L13.5,38.5 L28.5,22.5 Z" fill-rule="evenodd"/><circle cx="3.6" cy="44.4" r="3.6"/></g></svg>
<span style="top:70.5px;font-size:18px;line-height:18px;color:#ececec;white-space:pre;-webkit-text-stroke:0.32px #ececec;left:-15.02px;width:150.039px;text-align:center;transform-origin:50% 50%;transform:scaleX(0.909);">Color Overlay</span>
</div>
<div style="left:448px;top:360px;width:120px;height:102px;background:#343434;overflow:hidden;">
<svg style="left:36px;top:8px" width="48" height="48" viewBox="0 0 48 48"><g fill="#a9a9a9"><path d="M33,0 L48,13 L40,22.5 L25,9.5 Z"/><path d="M18.5,5.5 L21.5,2.5 L41.5,20 L38.5,23.5 Z" transform="translate(-1,4.5)"/><path d="M24.5,13 L34,21.5 L12,44 L5,44 L3.5,38.5 Z M25.5,19.5 L11,35.5 L10,39.5 L13.5,38.5 L28.5,22.5 Z" fill-rule="evenodd"/><circle cx="3.6" cy="44.4" r="3.6"/></g></svg>
<span style="top:70.5px;font-size:18px;line-height:18px;color:#ececec;white-space:pre;-webkit-text-stroke:0.32px #ececec;left:6.984px;width:106.031px;text-align:center;transform-origin:50% 50%;transform:scaleX(0.903);">Colorize</span>
</div>
<div style="left:570px;top:360px;width:120px;height:102px;background:#343434;overflow:hidden;">
<svg style="left:36px;top:8px" width="48" height="48" viewBox="0 0 48 48"><rect width="48" height="48" fill="#a9a9a9"/><path d="M3,3 H43.5 L3,43.5 Z" fill="#343434"/></svg>
<span style="top:70.5px;font-size:18px;line-height:18px;color:#ececec;white-space:pre;-webkit-text-stroke:0.32px #ececec;left:-11.033px;width:142.066px;text-align:center;transform-origin:50% 50%;transform:scaleX(0.958);">Desaturation</span>
</div>
<div style="left:692px;top:360px;width:120px;height:102px;background:#343434;overflow:hidden;">
<svg style="left:36px;top:8px" width="48" height="48" viewBox="0 0 48 48"><path transform="translate(3.84,0) scale(0.84)" d="M24,0 C24,0 38,19 38,33.5 A14,14.5 0 0 1 10,33.5 C10,19 24,0 24,0 Z" fill="#a9a9a9" /><rect x="0" y="17.5" width="48" height="11" fill="#343434"/><path d="M0,22.5 L9,17.5 V21 H39 V17.5 L48,22.5 L39,27.5 V24 H9 V27.5 Z" fill="#a9a9a9"/><path d="M10,28.5 H38 V34 A14,14 0 0 1 10,34 Z" fill="#a9a9a9"/></svg>
<span style="top:70.5px;font-size:18px;line-height:18px;color:#ececec;white-space:pre;-webkit-text-stroke:0.32px #ececec;left:-21.029px;width:162.059px;text-align:center;transform-origin:50% 50%;transform:scaleX(0.941);">Directional Blur</span>
</div>
<div style="left:814px;top:360px;width:120px;height:102px;background:#343434;overflow:hidden;">
<svg style="left:36px;top:8px" width="48" height="48" viewBox="0 0 48 48"><g fill="none" stroke="#a9a9a9" stroke-linecap="round" stroke-linejoin="round"><path d="M7,9 L28,29" stroke-width="8.5"/><path d="M45,3 L36,8 L40,22 C42,34 41,42 37,43 C30,44 24,38 14,37 L7,38 L3,44" stroke-width="5"/></g></svg>
<span style="top:70.5px;font-size:18px;line-height:18px;color:#ececec;white-space:pre;-webkit-text-stroke:0.32px #ececec;left:5.482px;width:109.035px;text-align:center;transform-origin:50% 50%;transform:scaleX(0.904);">Displace</span>
</div>
<div style="left:936px;top:360px;width:116px;height:102px;background:#343434;overflow:hidden;">
<svg style="left:36px;top:8px" width="48" height="48" viewBox="0 0 48 48"><rect x="9" y="12" width="39" height="36" fill="#a9a9a9"/><rect width="41.5" height="41.5" fill="#343434"/><rect width="39" height="39" fill="#a9a9a9"/></svg>
<span style="top:70.5px;font-size:18px;line-height:18px;color:#ececec;white-space:pre;-webkit-text-stroke:0.32px #ececec;left:-14.537px;width:149.074px;text-align:center;transform-origin:50% 50%;transform:scaleX(0.922);">Drop Shadow</span>
</div>
<div style="left:82px;top:464px;width:120px;height:102px;background:#343434;overflow:hidden;">
<svg style="left:36px;top:8px" width="48" height="48" viewBox="0 0 48 48"><path transform="translate(0,0) scale(1)" d="M24,0 C24,0 38,19 38,33.5 A14,14.5 0 0 1 10,33.5 C10,19 24,0 24,0 Z" fill="#a9a9a9" /></svg>
<span style="top:70.5px;font-size:18px;line-height:18px;color:#ececec;white-space:pre;-webkit-text-stroke:0.32px #ececec;left:3.988px;width:112.023px;text-align:center;transform-origin:50% 50%;transform:scaleX(0.937);">Fast Blur</span>
</div>
<div style="left:204px;top:464px;width:120px;height:102px;background:#343434;overflow:hidden;">
<svg style="left:36px;top:8px" width="48" height="48" viewBox="0 0 48 48"><path d="M8,9 C9.500,3.500 13,2 15.500,2.300 C18.500,2.800 20,5.500 21.500,8.500 L38,36 C39.200,38.200 38.800,39.800 36.800,41 L27.500,46 L19.500,41.200 C17.500,40 17,38.200 18,36.200 L39.500,2.500" fill="none" stroke="#a9a9a9" stroke-width="4.600" stroke-linecap="round" stroke-linejoin="round"/></svg>
<span style="top:70.5px;font-size:18px;line-height:18px;color:#ececec;white-space:pre;-webkit-text-stroke:0.32px #ececec;left:-19.027px;width:158.055px;text-align:center;transform-origin:50% 50%;transform:scaleX(0.944);">Gamma Adjust</span>
</div>
<div style="left:326px;top:464px;width:120px;height:102px;background:#343434;overflow:hidden;">
<svg style="left:36px;top:8px" width="48" height="48" viewBox="0 0 48 48"><path transform="translate(3.3599999999999994,6.7) scale(0.86)" d="M24,0 C24,0 38,19 38,33.5 A14,14.5 0 0 1 10,33.5 C10,19 24,0 24,0 Z" fill="#a9a9a9" filter="url(#gb)"/><path d="M0,16 H6 C14,16 15,1.5 24,1.5 C33,1.5 34,16 42,16 H48" fill="none" stroke="#343434" stroke-width="9"/><path d="M0,16 H6 C14,16 15,1.5 24,1.5 C33,1.5 34,16 42,16 H48" fill="none" stroke="#a9a9a9" stroke-width="3.4"/></svg>
<span style="top:70.5px;font-size:18px;line-height:18px;color:#ececec;white-space:pre;-webkit-text-stroke:0.32px #ececec;left:-16.531px;width:153.062px;text-align:center;transform-origin:50% 50%;transform:scaleX(0.914);">Gaussian Blur</span>
</div>
<div style="left:448px;top:464px;width:120px;height:102px;background:#343434;overflow:hidden;">
<svg style="left:36px;top:8px" width="48" height="48" viewBox="0 0 48 48"><path fill-rule="evenodd" fill="#a9a9a9" d="M24,0 C38,0 48,7 48,17 C48,26 40,31.5 33,31.5 H15 C8,31.5 0,26 0,17 C0,7 10,0 24,0 Z M24,7.5 C14,7.5 8,12 8,18 C8,23 11,25.5 15,25.5 H33 C37,25.5 40,23 40,18 C40,12 34,7.5 24,7.5 Z"/><path d="M13.5,38 H34.5 L29.5,48 H18.5 Z" fill="#a9a9a9"/></svg>
<span style="top:70.5px;font-size:18px;line-height:18px;color:#ececec;white-space:pre;-webkit-text-stroke:0.32px #ececec;left:19.494px;width:81.012px;text-align:center;transform-origin:50% 50%;transform:scaleX(0.941);">Glow</span>
</div>
<div style="left:570px;top:464px;width:120px;height:102px;background:#343434;overflow:hidden;">
<svg style="left:36px;top:8px" width="48" height="48" viewBox="0 0 48 48"><g fill="none" stroke="#a9a9a9" stroke-width="7"><circle cx="24" cy="14" r="10.5"/><circle cx="14" cy="34" r="10.5"/><circle cx="34" cy="34" r="10.5"/></g></svg>
<span style="top:70.5px;font-size:18px;line-height:18px;color:#ececec;white-space:pre;-webkit-text-stroke:0.32px #ececec;left:-20.043px;width:160.086px;text-align:center;transform-origin:50% 50%;transform:scaleX(0.939);">Hue Saturation</span>
</div>
<div style="left:692px;top:464px;width:120px;height:102px;background:#343434;overflow:hidden;">
<svg style="left:36px;top:8px" width="48" height="48" viewBox="0 0 48 48"><defs><linearGradient id="isg" x1="0" y1="0" x2="1" y2="1"><stop offset="0" stop-color="#3c3c3c"/><stop offset="1" stop-color="#b9bdc2"/></linearGradient></defs><rect width="48" height="48" fill="#9f9f9f"/><rect x="3" y="3" width="42" height="42" fill="#555"/><rect x="5" y="5" width="38" height="38" fill="url(#isg)"/></svg>
<span style="top:70.5px;font-size:18px;line-height:18px;color:#ececec;white-space:pre;-webkit-text-stroke:0.32px #ececec;left:-15.543px;width:151.086px;text-align:center;transform-origin:50% 50%;transform:scaleX(0.927);">Inner Shadow</span>
</div>
<div style="left:814px;top:464px;width:120px;height:102px;background:#343434;overflow:hidden;">
<svg style="left:36px;top:8px" width="48" height="48" viewBox="0 0 48 48"><rect x="0" y="0" width="12" height="48" fill="#a9a9a9"/><rect x="18" y="14" width="12" height="34" fill="#a9a9a9"/><rect x="36" y="26" width="12" height="22" fill="#a9a9a9"/></svg>
<span style="top:70.5px;font-size:18px;line-height:18px;color:#ececec;white-space:pre;-webkit-text-stroke:0.32px #ececec;left:-8.537px;width:137.074px;text-align:center;transform-origin:50% 50%;transform:scaleX(0.947);">Level Adjust</span>
</div>
<div style="left:936px;top:464px;width:116px;height:102px;background:#343434;overflow:hidden;">
<svg style="left:36px;top:8px" width="48" height="48" viewBox="0 0 48 48"><path transform="translate(-3.3399999999999963,0) scale(1.18,1)" d="M24,0 C24,0 38,19 38,33.5 A14,14.5 0 0 1 10,33.5 C10,19 24,0 24,0 Z" fill="#a9a9a9" /><rect x="28" y="25" width="20" height="4.6" fill="#343434"/><rect x="24.6" y="34.5" width="24" height="4.6" fill="#343434"/></svg>
<span style="top:70.5px;font-size:18px;line-height:18px;color:#ececec;white-space:pre;-webkit-text-stroke:0.32px #ececec;left:-10.023px;width:140.047px;text-align:center;transform-origin:50% 50%;transform:scaleX(0.935);">Masked Blur</span>
</div>
<div style="left:82px;top:568px;width:120px;height:102px;background:#343434;overflow:hidden;">
<svg style="left:36px;top:8px" width="48" height="48" viewBox="0 0 48 48"><rect width="36" height="36" fill="#a9a9a9"/><rect x="18" y="18" width="30" height="30" fill="#343434"/><path d="M19.850,24 V19.850 H24 M27,19.850 H39 M42,19.850 H46.150 V24 M46.150,27 V39 M46.150,42 V46.150 H42 M39,46.150 H27 M24,46.150 H19.850 V42 M19.850,39 V27" fill="none" stroke="#d5d1d0" stroke-width="3.700"/></svg>
<span style="top:70.5px;font-size:18px;line-height:18px;color:#ececec;white-space:pre;-webkit-text-stroke:0.32px #ececec;left:-14.516px;width:149.031px;text-align:center;transform-origin:50% 50%;transform:scaleX(0.936);">Opacity Mask</span>
</div>
<div style="left:204px;top:568px;width:120px;height:102px;background:#343434;overflow:hidden;">
<svg style="left:36px;top:8px" width="48" height="48" viewBox="0 0 48 48"><circle cx="24" cy="24" r="20.5" fill="none" stroke="#a9a9a9" stroke-width="7"/><path transform="translate(9.600000000000001,9.5) scale(0.6)" d="M24,0 C24,0 38,19 38,33.5 A14,14.5 0 0 1 10,33.5 C10,19 24,0 24,0 Z" fill="#a9a9a9" /></svg>
<span style="top:70.5px;font-size:18px;line-height:18px;color:#ececec;white-space:pre;-webkit-text-stroke:0.32px #ececec;left:-4.025px;width:128.051px;text-align:center;transform-origin:50% 50%;transform:scaleX(0.911);">Radial Blur</span>
</div>
<div style="left:326px;top:568px;width:120px;height:102px;background:#343434;overflow:hidden;">
<svg style="left:36px;top:8px" width="48" height="48" viewBox="0 0 48 48"><g filter="url(#gb)"><path transform="translate(-4.200,0) scale(1.175,1)" d="M24,0 C24,0 38,19 38,33.5 A14,14.5 0 0 1 10,33.5 C10,19 24,0 24,0 Z" fill="#a9a9a9"/><path transform="translate(10.500,17.600) scale(0.570,0.470)" d="M24,0 C24,0 38,19 38,33.5 A14,14.5 0 0 1 10,33.5 C10,19 24,0 24,0 Z" fill="#343434"/></g></svg>
<span style="top:70.5px;font-size:18px;line-height:18px;color:#ececec;white-space:pre;-webkit-text-stroke:0.32px #ececec;left:-18.523px;width:157.047px;text-align:center;transform-origin:50% 50%;transform:scaleX(0.923);">Recursive Blur</span>
</div>
<div style="left:448px;top:568px;width:120px;height:102px;background:#343434;overflow:hidden;">
<svg style="left:36px;top:8px" width="48" height="48" viewBox="0 0 48 48"><polygon points="0,0 6,0 6,6 12,6 12,12 18,12 18,18 24,18 24,24 30,24 30,30 36,30 36,36 42,36 42,42 48,42 48,48 0,48" fill="#a9a9a9"/></svg>
<span style="top:57px;font-size:18px;line-height:18px;color:#ececec;white-space:pre;-webkit-text-stroke:0.32px #ececec;left:-0.025px;width:120.051px;text-align:center;transform-origin:50% 50%;transform:scaleX(0.934);">Threshold</span>
<span style="top:85px;font-size:18px;line-height:18px;color:#ececec;white-space:pre;-webkit-text-stroke:0.32px #ececec;left:18.496px;width:83.008px;text-align:center;transform-origin:50% 50%;transform:scaleX(0.939);">Mask</span>
</div>
<div style="left:570px;top:568px;width:120px;height:102px;background:#343434;overflow:hidden;">
<svg style="left:36px;top:8px" width="48" height="48" viewBox="0 0 48 48"><path transform="translate(0,0) scale(1)" d="M24,0 C24,0 38,19 38,33.5 A14,14.5 0 0 1 10,33.5 C10,19 24,0 24,0 Z" fill="#a9a9a9" /><path d="M21.100,24.400 H27.300 V30.900 H34.500 V37.100 H27.300 V43.700 H21.100 V37.100 H13.900 V30.900 H21.100 Z" fill="#343434"/></svg>
<span style="top:70.5px;font-size:18px;line-height:18px;color:#ececec;white-space:pre;-webkit-text-stroke:0.32px #ececec;left:-1.516px;width:123.031px;text-align:center;transform-origin:50% 50%;transform:scaleX(0.944);">Zoom Blur</span>
</div>
<div style="left:78px;top:682px;width:974px;height:40px;background:#1b1b1b;"></div>
<svg style="left:86.5px;top:698px;" width="15" height="8.5" viewBox="0 0 15 8.5"><path d="M0,0 H15 L7.500,8.500 Z" fill="#9c9c9c"/></svg>
<span style="top:691px;font-size:24px;line-height:24px;color:#fff;white-space:pre;-webkit-text-stroke:0.427px #fff;left:123.5px;transform-origin:0 50%;transform:scaleX(1.027);">Qt Quick - Animation</span>
<div style="left:82px;top:728px;width:120px;height:102px;background:#343434;overflow:hidden;">
<svg style="left:36px;top:8px" width="48" height="48" viewBox="0 0 48 48"><g fill="none" stroke="#a9a9a9" stroke-width="3"><path d="M1.5,12 V1.5 H12 M36,1.5 H46.5 V12 M46.5,36 V46.5 H36 M12,46.5 H1.5 V36"/><rect x="13.5" y="13.5" width="21" height="21"/></g></svg>
<span style="top:70.5px;font-size:18px;line-height:18px;color:#ececec;white-space:pre;-webkit-text-stroke:0.32px #ececec;left:-22.029px;width:164.059px;text-align:center;transform-origin:50% 50%;transform:scaleX(0.927);">ColorA...mation</span>
</div>
<div style="left:204px;top:728px;width:120px;height:102px;background:#343434;overflow:hidden;">
<svg style="left:36px;top:8px" width="48" height="48" viewBox="0 0 48 48"><g fill="none" stroke="#a9a9a9" stroke-width="3"><path d="M1.5,12 V1.5 H12 M36,1.5 H46.5 V12 M46.5,36 V46.5 H36 M12,46.5 H1.5 V36"/><rect x="13.5" y="13.5" width="21" height="21"/></g></svg>
<span style="top:57px;font-size:18px;line-height:18px;color:#ececec;white-space:pre;-webkit-text-stroke:0.32px #ececec;left:7.986px;width:104.027px;text-align:center;transform-origin:50% 50%;transform:scaleX(0.937);">Number</span>
<span style="top:85px;font-size:18px;line-height:18px;color:#ececec;white-space:pre;-webkit-text-stroke:0.32px #ececec;left:-0.025px;width:120.051px;text-align:center;transform-origin:50% 50%;transform:scaleX(0.966);">Animation</span>
</div>
<div style="left:326px;top:728px;width:120px;height:102px;background:#343434;overflow:hidden;">
<svg style="left:36px;top:8px" width="48" height="48" viewBox="0 0 48 48"><g fill="none" stroke="#a9a9a9" stroke-width="3"><path d="M1.5,12 V1.5 H12 M36,1.5 H46.5 V12 M46.5,36 V46.5 H36 M12,46.5 H1.5 V36"/><rect x="13.5" y="13.5" width="21" height="21"/></g></svg>
<span style="top:57px;font-size:18px;line-height:18px;color:#ececec;white-space:pre;-webkit-text-stroke:0.32px #ececec;left:9.98px;width:100.039px;text-align:center;transform-origin:50% 50%;transform:scaleX(0.933);">Parallel</span>
<span style="top:85px;font-size:18px;line-height:18px;color:#ececec;white-space:pre;-webkit-text-stroke:0.32px #ececec;left:-0.025px;width:120.051px;text-align:center;transform-origin:50% 50%;transform:scaleX(0.966);">Animation</span>
</div>
<div style="left:448px;top:728px;width:120px;height:102px;background:#343434;overflow:hidden;">
<svg style="left:36px;top:8px" width="48" height="48" viewBox="0 0 48 48"><g fill="none" stroke="#a9a9a9" stroke-width="3"><path d="M1.5,12 V1.5 H12 M36,1.5 H46.5 V12 M46.5,36 V46.5 H36 M12,46.5 H1.5 V36"/><rect x="13.5" y="13.5" width="21" height="21"/></g></svg>
<span style="top:57px;font-size:18px;line-height:18px;color:#ececec;white-space:pre;-webkit-text-stroke:0.32px #ececec;left:14.479px;width:91.043px;text-align:center;transform-origin:50% 50%;transform:scaleX(0.917);">Pause</span>
<span style="top:85px;font-size:18px;line-height:18px;color:#ececec;white-space:pre;-webkit-text-stroke:0.32px #ececec;left:-0.025px;width:120.051px;text-align:center;transform-origin:50% 50%;transform:scaleX(0.966);">Animation</span>
</div>
<div style="left:570px;top:728px;width:120px;height:102px;background:#343434;overflow:hidden;">
<svg style="left:36px;top:8px" width="48" height="48" viewBox="0 0 48 48"><g fill="none" stroke="#a9a9a9" stroke-width="3"><path d="M1.5,12 V1.5 H12 M36,1.5 H46.5 V12 M46.5,36 V46.5 H36 M12,46.5 H1.5 V36"/><rect x="13.5" y="13.5" width="21" height="21"/></g></svg>
<span style="top:57px;font-size:18px;line-height:18px;color:#ececec;white-space:pre;-webkit-text-stroke:0.32px #ececec;left:5.982px;width:108.035px;text-align:center;transform-origin:50% 50%;transform:scaleX(0.955);">Property</span>
<span style="top:85px;font-size:18px;line-height:18px;color:#ececec;white-space:pre;-webkit-text-stroke:0.32px #ececec;left:14.984px;width:90.031px;text-align:center;transform-origin:50% 50%;transform:scaleX(0.945);">Action</span>
</div>
<div style="left:692px;top:728px;width:120px;height:102px;background:#343434;overflow:hidden;">
<svg style="left:36px;top:8px" width="48" height="48" viewBox="0 0 48 48"><g fill="none" stroke="#a9a9a9" stroke-width="3"><path d="M1.5,12 V1.5 H12 M36,1.5 H46.5 V12 M46.5,36 V46.5 H36 M12,46.5 H1.5 V36"/><rect x="13.5" y="13.5" width="21" height="21"/></g></svg>
<span style="top:57px;font-size:18px;line-height:18px;color:#ececec;white-space:pre;-webkit-text-stroke:0.32px #ececec;left:5.982px;width:108.035px;text-align:center;transform-origin:50% 50%;transform:scaleX(0.955);">Property</span>
<span style="top:85px;font-size:18px;line-height:18px;color:#ececec;white-space:pre;-webkit-text-stroke:0.32px #ececec;left:-0.025px;width:120.051px;text-align:center;transform-origin:50% 50%;transform:scaleX(0.966);">Animation</span>
</div>
<div style="left:814px;top:728px;width:120px;height:102px;background:#343434;overflow:hidden;">
<svg style="left:36px;top:8px" width="48" height="48" viewBox="0 0 48 48"><g fill="none" stroke="#a9a9a9" stroke-width="3"><path d="M1.5,12 V1.5 H12 M36,1.5 H46.5 V12 M46.5,36 V46.5 H36 M12,46.5 H1.5 V36"/><rect x="13.5" y="13.5" width="21" height="21"/></g></svg>
<span style="top:70.5px;font-size:18px;line-height:18px;color:#ececec;white-space:pre;-webkit-text-stroke:0.32px #ececec;left:-10.027px;width:140.055px;text-align:center;transform-origin:50% 50%;transform:scaleX(0.944);">Script Action</span>
</div>
<div style="left:936px;top:728px;width:116px;height:102px;background:#343434;overflow:hidden;">
<svg style="left:36px;top:8px" width="48" height="48" viewBox="0 0 48 48"><g fill="none" stroke="#a9a9a9" stroke-width="3"><path d="M1.5,12 V1.5 H12 M36,1.5 H46.5 V12 M46.5,36 V46.5 H36 M12,46.5 H1.5 V36"/><rect x="13.5" y="13.5" width="21" height="21"/></g></svg>
<span style="top:57px;font-size:18px;line-height:18px;color:#ececec;white-space:pre;-webkit-text-stroke:0.32px #ececec;left:-2.539px;width:125.078px;text-align:center;transform-origin:50% 50%;transform:scaleX(0.934);">Sequential</span>
<span style="top:85px;font-size:18px;line-height:18px;color:#ececec;white-space:pre;-webkit-text-stroke:0.32px #ececec;left:-0.025px;width:120.051px;text-align:center;transform-origin:50% 50%;transform:scaleX(0.966);">Animation</span>
</div>
<div style="left:78px;top:842px;width:974px;height:40px;background:#1b1b1b;"></div>
<svg style="left:86.5px;top:858px;" width="15" height="8.5" viewBox="0 0 15 8.5"><path d="M0,0 H15 L7.500,8.500 Z" fill="#9c9c9c"/></svg>
<span style="top:851px;font-size:24px;line-height:24px;color:#fff;white-space:pre;-webkit-text-stroke:0.427px #fff;left:123.5px;transform-origin:0 50%;transform:scaleX(0.992);">Qt Quick - Basic</span>
<div style="left:82px;top:888px;width:120px;height:102px;background:#343434;overflow:hidden;">
<svg style="left:36px;top:8px" width="48" height="48" viewBox="0 0 48 48"><g fill="none" stroke="#a9a9a9" stroke-width="2.6"><rect x="10.3" y="1.3" width="36.4" height="36.4"/><rect x="4.3" y="7.3" width="36.4" height="36.4" fill="#343434"/></g><rect x="0" y="12" width="36" height="36" fill="#a9a9a9"/><rect x="36" y="12" width="1.6" height="36" fill="#343434"/><rect x="0" y="10.6" width="37.6" height="1.6" fill="#343434"/><circle cx="7.5" cy="25.5" r="4.3" fill="#343434"/><path d="M9,42 L21,19 L33,42 Z" fill="#343434"/></svg>
<span style="top:57px;font-size:18px;line-height:18px;color:#ececec;white-space:pre;-webkit-text-stroke:0.32px #ececec;left:1.975px;width:116.051px;text-align:center;transform-origin:50% 50%;transform:scaleX(0.963);">Animated</span>
<span style="top:85px;font-size:18px;line-height:18px;color:#ececec;white-space:pre;-webkit-text-stroke:0.32px #ececec;left:14.984px;width:90.031px;text-align:center;transform-origin:50% 50%;transform:scaleX(0.939);">Image</span>
</div>
<div style="left:204px;top:888px;width:120px;height:102px;background:#343434;overflow:hidden;">
<svg style="left:36px;top:8px" width="48" height="48" viewBox="0 0 48 48"><rect x="4.5" y="7.5" width="39" height="33" fill="none" stroke="#a9a9a9" stroke-width="3"/><g fill="#a9a9a9"><rect x="0" y="3" width="9" height="9"/><rect x="39" y="3" width="9" height="9"/><rect x="0" y="36" width="9" height="9"/><rect x="39" y="36" width="9" height="9"/><circle cx="13.5" cy="19.5" r="4.5"/><path d="M15,36 L28,12.5 L40,36 Z"/></g></svg>
<span style="top:70.5px;font-size:18px;line-height:18px;color:#ececec;white-space:pre;-webkit-text-stroke:0.32px #ececec;left:-14.533px;width:149.066px;text-align:center;transform-origin:50% 50%;transform:scaleX(0.937);">Border Image</span>
</div>
<div style="left:326px;top:888px;width:120px;height:102px;background:#343434;overflow:hidden;">
<svg style="left:36px;top:8px" width="48" height="48" viewBox="0 0 48 48"><rect x="0" y="0" width="18" height="48" fill="#a9a9a9"/><rect x="30" y="0" width="18" height="48" fill="#a9a9a9"/><path d="M3.3,24 L12,15.5 V20 H18 V28.5 H12 V33 Z" fill="#343434"/><path d="M44.7,24 L36,15.5 V20 H30 V28.5 H36 V33 Z" fill="#343434"/></svg>
<span style="top:70.5px;font-size:18px;line-height:18px;color:#ececec;white-space:pre;-webkit-text-stroke:0.32px #ececec;left:4.484px;width:111.031px;text-align:center;transform-origin:50% 50%;transform:scaleX(0.909);">Flickable</span>
</div>
<div style="left:448px;top:888px;width:120px;height:102px;background:#343434;overflow:hidden;">
<svg style="left:36px;top:8px" width="48" height="48" viewBox="0 0 48 48"><rect x="4.5" y="10.5" width="39" height="27" fill="none" stroke="#a9a9a9" stroke-width="3" stroke-dasharray="6.2 3.4" stroke-dashoffset="3"/></svg>
<span style="top:70.5px;font-size:18px;line-height:18px;color:#ececec;white-space:pre;-webkit-text-stroke:0.32px #ececec;left:-12.531px;width:145.062px;text-align:center;transform-origin:50% 50%;transform:scaleX(0.88);">Focus Scope</span>
</div>
<div style="left:570px;top:888px;width:120px;height:102px;background:#343434;overflow:hidden;">
<svg style="left:36px;top:8px" width="48" height="48" viewBox="0 0 48 48"><rect width="48" height="48" fill="#a9a9a9"/><rect x="3" y="3" width="42" height="40" fill="#343434"/><circle cx="12" cy="12" r="6" fill="#a9a9a9"/><path d="M5.5,41.5 L15,25 L21.5,34 L32.5,12.5 L45,38.5 V41.5 Z" fill="#a9a9a9"/></svg>
<span style="top:70.5px;font-size:18px;line-height:18px;color:#ececec;white-space:pre;-webkit-text-stroke:0.32px #ececec;left:14.984px;width:90.031px;text-align:center;transform-origin:50% 50%;transform:scaleX(0.939);">Image</span>
</div>
<div style="left:692px;top:888px;width:120px;height:102px;background:#343434;overflow:hidden;">
<svg style="left:36px;top:8px" width="48" height="48" viewBox="0 0 48 48"><g fill="none" stroke="#a9a9a9" stroke-width="3"><path d="M1.5,12 V1.5 H12 M36,1.5 H46.5 V12 M46.5,36 V46.5 H36 M12,46.5 H1.5 V36"/><rect x="13.5" y="13.5" width="21" height="21"/></g></svg>
<span style="top:70.5px;font-size:18px;line-height:18px;color:#ececec;white-space:pre;-webkit-text-stroke:0.32px #ececec;left:22.496px;width:75.008px;text-align:center;transform-origin:50% 50%;transform:scaleX(0.988);">Item</span>
</div>
<div style="left:814px;top:888px;width:120px;height:102px;background:#343434;overflow:hidden;">
<svg style="left:36px;top:8px" width="48" height="48" viewBox="0 0 48 48"><path d="M12.00,2.00h3.13v3.43h-3.13zM12.00,5.13h6.26v3.43h-6.26zM12.00,8.26h9.39v3.43h-9.39zM12.00,11.39h12.52v3.43h-12.52zM12.00,14.52h15.65v3.43h-15.65zM12.00,17.65h18.78v3.43h-18.78zM12.00,20.78h21.91v3.43h-21.91zM12.00,23.91h25.04v3.43h-25.04zM12.00,27.04h15.65v3.43h-15.65zM12.00,30.17h6.26v3.43h-6.26zM21.39,30.17h6.26v3.43h-6.26zM12.00,33.30h3.13v3.43h-3.13zM24.52,33.30h6.26v3.43h-6.26zM24.52,36.43h6.26v3.43h-6.26zM27.65,39.56h6.26v3.43h-6.26zM27.65,42.69h6.26v3.43h-6.26z" fill="#a9a9a9"/></svg>
<span style="top:70.5px;font-size:18px;line-height:18px;color:#ececec;white-space:pre;-webkit-text-stroke:0.32px #ececec;left:-8.033px;width:136.066px;text-align:center;transform-origin:50% 50%;transform:scaleX(0.941);">Mouse Area</span>
</div>
<div style="left:936px;top:888px;width:116px;height:102px;background:#343434;overflow:hidden;">
<svg style="left:36px;top:8px" width="48" height="48" viewBox="0 0 48 48"><rect x="0" y="6" width="48" height="36" rx="10.5" fill="#a9a9a9"/></svg>
<span style="top:70.5px;font-size:18px;line-height:18px;color:#ececec;white-space:pre;-webkit-text-stroke:0.32px #ececec;left:-0.529px;width:121.059px;text-align:center;transform-origin:50% 50%;transform:scaleX(0.92);">Rectangle</span>
</div>
<div style="left:82px;top:992px;width:120px;height:102px;background:#343434;overflow:hidden;">
<svg style="left:36px;top:8px" width="48" height="48" viewBox="0 0 48 48"><path d="M0,0 H48 V15 H39 V8.5 H30 V42 H38.8 V48 H8.8 V42 H19 V8.5 H9 V15 H0 Z" fill="#a9a9a9"/></svg>
<span style="top:70.5px;font-size:18px;line-height:18px;color:#ececec;white-space:pre;-webkit-text-stroke:0.32px #ececec;left:23.494px;width:73.012px;text-align:center;transform-origin:50% 50%;transform:scaleX(0.96);">Text</span>
</div>
<div style="left:204px;top:992px;width:120px;height:102px;background:#343434;overflow:hidden;">
<svg style="left:36px;top:8px" width="48" height="48" viewBox="0 0 48 48"><path d="M0,15 H27 V27 H21 V21.5 H18.5 V33.5 H24 V39 H3 V33.5 H9 V21.5 H6 V27 H0 Z" fill="#a9a9a9"/><path d="M27,0 H48 V2.8 H39.2 V45.2 H48 V48 H27 V45.2 H36 V2.8 H27 Z" fill="#a9a9a9"/></svg>
<span style="top:70.5px;font-size:18px;line-height:18px;color:#ececec;white-space:pre;-webkit-text-stroke:0.32px #ececec;left:5.484px;width:109.031px;text-align:center;transform-origin:50% 50%;transform:scaleX(0.936);">Text Edit</span>
</div>
<div style="left:326px;top:992px;width:120px;height:102px;background:#343434;overflow:hidden;">
<svg style="left:36px;top:8px" width="48" height="48" viewBox="0 0 48 48"><rect x="0" y="6" width="48" height="36" fill="#a9a9a9"/><path d="M2.8,9.5 H30 V21 H24.5 V16 H21 V32.5 H27 V39 H5.8 V32.5 H12 V16 H8.3 V21 H2.8 Z" fill="#343434"/></svg>
<span style="top:70.5px;font-size:18px;line-height:18px;color:#ececec;white-space:pre;-webkit-text-stroke:0.32px #ececec;left:0.977px;width:118.047px;text-align:center;transform-origin:50% 50%;transform:scaleX(0.951);">Text Input</span>
</div>
<div style="left:78px;top:1106px;width:974px;height:40px;background:#1b1b1b;"></div>
<svg style="left:86.5px;top:1122px;" width="15" height="8.5" viewBox="0 0 15 8.5"><path d="M0,0 H15 L7.500,8.500 Z" fill="#9c9c9c"/></svg>
<span style="top:1115px;font-size:24px;line-height:24px;color:#fff;white-space:pre;-webkit-text-stroke:0.427px #fff;left:123.5px;transform-origin:0 50%;transform:scaleX(1.004);">Qt Quick - Controls 2</span>
<div style="left:82px;top:1152px;width:120px;height:102px;background:#343434;overflow:hidden;">
<svg style="left:36px;top:8px" width="48" height="48" viewBox="0 0 48 48"><circle cx="24.00" cy="4.50" r="4.4" fill="#a9a9a9"/><circle cx="37.79" cy="10.21" r="4.4" fill="#a9a9a9"/><circle cx="43.50" cy="24.00" r="4.4" fill="#a9a9a9"/><circle cx="37.79" cy="37.79" r="4.4" fill="#a9a9a9"/><circle cx="24.00" cy="43.50" r="4.4" fill="#a9a9a9"/><circle cx="10.21" cy="37.79" r="4.4" fill="#a9a9a9"/><circle cx="4.50" cy="24.00" r="4.4" fill="#a9a9a9"/><circle cx="10.21" cy="10.21" r="4.4" fill="#a9a9a9"/></svg>
<span style="top:70.5px;font-size:18px;line-height:18px;color:#ececec;white-space:pre;-webkit-text-stroke:0.32px #ececec;left:-17.031px;width:154.062px;text-align:center;transform-origin:50% 50%;transform:scaleX(0.938);">Busy Indicator</span>
</div>
<div style="left:204px;top:1152px;width:120px;height:102px;background:#343434;overflow:hidden;">
<svg style="left:36px;top:8px" width="48" height="48" viewBox="0 0 48 48"><rect x="0" y="12" width="48" height="24" rx="10.5" fill="#a9a9a9"/></svg>
<span style="top:70.5px;font-size:18px;line-height:18px;color:#ececec;white-space:pre;-webkit-text-stroke:0.32px #ececec;left:13.979px;width:92.043px;text-align:center;transform-origin:50% 50%;transform:scaleX(0.984);">Button</span>
</div>
<div style="left:326px;top:1152px;width:120px;height:102px;background:#343434;overflow:hidden;">
<svg style="left:36px;top:8px" width="48" height="48" viewBox="0 0 48 48"><rect width="48" height="48" fill="#a9a9a9"/><path d="M9,21 L21.5,33 L39,14.5" fill="none" stroke="#343434" stroke-width="6.5"/></svg>
<span style="top:70.5px;font-size:18px;line-height:18px;color:#ececec;white-space:pre;-webkit-text-stroke:0.32px #ececec;left:-3.521px;width:127.043px;text-align:center;transform-origin:50% 50%;transform:scaleX(0.875);">Check Box</span>
</div>
<div style="left:448px;top:1152px;width:120px;height:102px;background:#343434;overflow:hidden;">
<svg style="left:36px;top:8px" width="48" height="48" viewBox="0 0 48 48"><rect width="48" height="48" fill="#a9a9a9"/><path d="M9,21 L21.5,33 L39,14.5" fill="none" stroke="#343434" stroke-width="6.5"/></svg>
<span style="top:57px;font-size:18px;line-height:18px;color:#ececec;white-space:pre;-webkit-text-stroke:0.32px #ececec;left:14.488px;width:91.023px;text-align:center;transform-origin:50% 50%;transform:scaleX(0.876);">Check</span>
<span style="top:85px;font-size:18px;line-height:18px;color:#ececec;white-space:pre;-webkit-text-stroke:0.32px #ececec;left:3.971px;width:112.059px;text-align:center;transform-origin:50% 50%;transform:scaleX(0.926);">Delegate</span>
</div>
<div style="left:570px;top:1152px;width:120px;height:102px;background:#343434;overflow:hidden;">
<svg style="left:36px;top:8px" width="48" height="48" viewBox="0 0 48 48"><rect x="1.5" y="1.5" width="36" height="45" fill="none" stroke="#a9a9a9" stroke-width="3"/><rect x="3" y="3" width="33" height="12" fill="#d5d1d0"/><rect x="36" y="0" width="12" height="18" fill="#a9a9a9"/><rect x="39" y="3.3" width="6" height="2.6" fill="#343434"/><rect x="39" y="12" width="6" height="2.6" fill="#343434"/><rect x="0" y="15" width="39" height="3" fill="#a9a9a9"/><rect x="0" y="30" width="39" height="3" fill="#a9a9a9"/></svg>
<span style="top:70.5px;font-size:18px;line-height:18px;color:#ececec;white-space:pre;-webkit-text-stroke:0.32px #ececec;left:-7.025px;width:134.051px;text-align:center;transform-origin:50% 50%;transform:scaleX(0.896);">Combo Box</span>
</div>
<div style="left:692px;top:1152px;width:120px;height:102px;background:#343434;overflow:hidden;">
<svg style="left:36px;top:8px" width="48" height="48" viewBox="0 0 48 48"><rect x="0" y="12" width="48" height="24" rx="11" fill="#a9a9a9"/><clipPath id="dbc"><rect x="0" y="12" width="23" height="24"/></clipPath><rect x="0" y="12" width="48" height="24" rx="11" fill="#d5d1d0" clip-path="url(#dbc)"/></svg>
<span style="top:70.5px;font-size:18px;line-height:18px;color:#ececec;white-space:pre;-webkit-text-stroke:0.32px #ececec;left:-11.533px;width:143.066px;text-align:center;transform-origin:50% 50%;transform:scaleX(0.957);">Delay Button</span>
</div>
<div style="left:814px;top:1152px;width:120px;height:102px;background:#343434;overflow:hidden;">
<svg style="left:36px;top:8px" width="48" height="48" viewBox="0 0 48 48"><circle cx="24" cy="24" r="24" fill="#a9a9a9"/><circle cx="24" cy="14" r="6" fill="#343434"/></svg>
<span style="top:70.5px;font-size:18px;line-height:18px;color:#ececec;white-space:pre;-webkit-text-stroke:0.32px #ececec;left:24.494px;width:71.012px;text-align:center;transform-origin:50% 50%;transform:scaleX(0.884);">Dial</span>
</div>
<div style="left:936px;top:1152px;width:116px;height:102px;background:#343434;overflow:hidden;">
<svg style="left:36px;top:8px" width="48" height="48" viewBox="0 0 48 48"><rect x="3" y="3" width="42" height="42" fill="none" stroke="#a9a9a9" stroke-width="6"/></svg>
<span style="top:70.5px;font-size:18px;line-height:18px;color:#ececec;white-space:pre;-webkit-text-stroke:0.32px #ececec;left:13.994px;width:92.012px;text-align:center;transform-origin:50% 50%;transform:scaleX(0.931);">Frame</span>
</div>
<div style="left:78px;top:1254px;width:994px;height:2px;background:#474747;"></div>
<div style="left:78px;top:1254px;width:668px;height:42px;background:#262728;"></div>
<div style="left:78px;top:1254px;width:668px;height:2px;background:#474747;"></div>
<div style="left:78px;top:1256px;width:164px;height:40px;background:#0492c9;"></div>
<div style="left:78px;top:1296px;width:668px;height:4px;background:#0492c9;"></div>
<span style="top:1264px;font-size:26px;line-height:26px;color:#fff;white-space:pre;-webkit-text-stroke:0.462px #fff;left:98.5px;transform-origin:0 50%;transform:scaleX(0.958);">Projects</span>
<svg style="left:204px;top:1269px;" width="20" height="20" viewBox="0 0 20 20"><path d="M1,1 L19,19 M19,1 L1,19" stroke="#fff" stroke-width="2.4" fill="none"/></svg>
<svg style="left:637px;top:1270.5px;" width="27" height="16" viewBox="0 0 27 16"><path d="M1,1.500 L13.500,14 L26,1.500" fill="none" stroke="#d2d2d2" stroke-width="2.400"/></svg>
<svg style="left:674px;top:1264.5px;" width="29" height="25" viewBox="0 0 29 25"><path d="M15,4.200 H7.500 a6,6 0 0 0 -6,6 V17.500 a6,6 0 0 0 6,6 H16.500 a6,6 0 0 0 6,-6 V13" fill="none" stroke="#d2d2d2" stroke-width="2.400"/><rect x="17.700" y="1.200" width="9.600" height="9" rx="1.500" fill="none" stroke="#d2d2d2" stroke-width="2.400"/></svg>
<svg style="left:715px;top:1266.3px;" width="21" height="21" viewBox="0 0 21 21"><path d="M1,1 L20,20 M20,1 L1,20" stroke="#d2d2d2" stroke-width="2.4" fill="none"/></svg>
<div style="left:78px;top:1300px;width:668px;height:1046px;background:#262626;"></div>
<svg style="left:88.5px;top:1318.5px;" width="15" height="8.5" viewBox="0 0 15 8.5"><path d="M0,0 H15 L7.500,8.500 Z" fill="#9c9c9c"/></svg>
<svg style="left:121px;top:1310px;" width="32" height="30" viewBox="0 0 32 30"><path d="M0,2.500 a2.500,2.500 0 0 1 2.500,-2.500 H10.500 L13.500,3.200 H28 a2.500,2.500 0 0 1 2.500,2.500 V8 H0 Z" fill="#43acea"/><rect x="0" y="5.600" width="30.500" height="19" rx="2" fill="#6cc5f5"/><text x="18.500" y="23.200" font-size="17" font-weight="bold" text-anchor="middle" fill="#1b8ca8" stroke="#ffffff" stroke-width="2" paint-order="stroke" stroke-linejoin="round" font-family="Liberation Sans" textLength="24.500" lengthAdjust="spacingAndGlyphs">qml</text></svg>
<span style="top:1309px;font-size:26px;line-height:26px;color:#e6e6e6;white-space:pre;-webkit-text-stroke:0.462px #e6e6e6;left:165px;transform-origin:0 50%;transform:scaleX(0.984);">untitled31</span>
<svg style="left:155px;top:1351px;" width="34" height="34" viewBox="0 0 34 34"><path d="M6,0 H19 L28,9 V30 H6 Z" fill="#fafafa"/><path d="M19,0 L28,9 H19 Z" fill="#d0d4d8"/><text x="12" y="24" font-size="14.500" font-weight="bold" text-anchor="middle" fill="#1d86a8" font-family="Liberation Sans" textLength="23" lengthAdjust="spacingAndGlyphs">qm</text><rect x="22" y="13" width="9" height="19" fill="#3c4a78"/><rect x="24" y="15" width="2" height="15" fill="#c8d0e8"/><rect x="27.500" y="15" width="1.500" height="15" fill="#8a96c0"/></svg>
<span style="top:1353px;font-size:26px;line-height:26px;color:#e6e6e6;white-space:pre;-webkit-text-stroke:0.462px #e6e6e6;left:200.5px;transform-origin:0 50%;transform:scaleX(0.979);">untitled31.qmlproject</span>
<svg style="left:127.5px;top:1402.5px;" width="8.5" height="15" viewBox="0 0 8.5 15"><path d="M0,0 L8.500,7.500 L0,15 Z" fill="#9c9c9c"/></svg>
<svg style="left:157px;top:1398px;" width="32" height="30" viewBox="0 0 32 30"><path d="M0,2.500 a2.500,2.500 0 0 1 2.500,-2.500 H10.500 L13.500,3.200 H28 a2.500,2.500 0 0 1 2.500,2.500 V8 H0 Z" fill="#43acea"/><rect x="0" y="5.600" width="30.500" height="19" rx="2" fill="#6cc5f5"/></svg>
<span style="top:1397px;font-size:26px;line-height:26px;color:#e6e6e6;white-space:pre;-webkit-text-stroke:0.462px #e6e6e6;left:200.5px;transform-origin:0 50%;transform:scaleX(0.985);">imports</span>
<svg style="left:160px;top:1438px;" width="26" height="32" viewBox="0 0 26 32"><path d="M1,0 H16 L25,9 V31 H1 Z" fill="#fafafa"/><path d="M16,0 L25,9 H16 Z" fill="#d0d4d8"/><rect x="4" y="7" width="15" height="12" fill="#5d88b8"/><path d="M4,19 L9,12 L13,16 L16,13 L19,19 Z" fill="#d8dde2"/><circle cx="16.500" cy="14.500" r="4" fill="none" stroke="#444" stroke-width="1.300"/><text x="13" y="28.500" font-size="7.500" text-anchor="middle" fill="#333" font-family="Liberation Sans">PNG</text></svg>
<span style="top:1441px;font-size:26px;line-height:26px;color:#e6e6e6;white-space:pre;-webkit-text-stroke:0.462px #e6e6e6;left:200.5px;transform-origin:0 50%;transform:scaleX(0.961);">logo_small.png</span>
<svg style="left:160px;top:1482px;" width="26" height="32" viewBox="0 0 26 32"><path d="M1,0 H16 L25,9 V31 H1 Z" fill="#fafafa"/><path d="M16,0 L25,9 H16 Z" fill="#d0d4d8"/><rect x="4" y="7" width="15" height="12" fill="#5d88b8"/><path d="M4,19 L9,12 L13,16 L16,13 L19,19 Z" fill="#d8dde2"/><circle cx="16.500" cy="14.500" r="4" fill="none" stroke="#444" stroke-width="1.300"/><text x="13" y="28.500" font-size="7.500" text-anchor="middle" fill="#333" font-family="Liberation Sans">PNG</text></svg>
<span style="top:1485px;font-size:26px;line-height:26px;color:#e6e6e6;white-space:pre;-webkit-text-stroke:0.462px #e6e6e6;left:200.5px;transform-origin:0 50%;transform:scaleX(0.976);">logo_small_invert.png</span>
<svg style="left:159px;top:1526px;" width="26" height="32" viewBox="0 0 26 32"><path d="M1,0 H16 L25,9 V31 H1 Z" fill="#2fa35b"/><path d="M16,0 L25,9 H16 Z" fill="#9fdab5"/><g fill="none" stroke="#e8f6ec" stroke-width="1.400"><ellipse cx="13" cy="19" rx="9" ry="3.600"/><ellipse cx="13" cy="19" rx="9" ry="3.600" transform="rotate(60 13 19)"/><ellipse cx="13" cy="19" rx="9" ry="3.600" transform="rotate(120 13 19)"/></g><circle cx="13" cy="19" r="1.800" fill="#e8f6ec"/></svg>
<span style="top:1529px;font-size:26px;line-height:26px;color:#e6e6e6;white-space:pre;-webkit-text-stroke:0.462px #e6e6e6;left:200.5px;transform-origin:0 50%;transform:scaleX(0.96);">qtquickcontrols2.conf</span>
<div style="left:78px;top:1564px;width:116px;height:44px;background:#0492c9;"></div>
<svg style="left:160.5px;top:1570.7px;" width="30" height="34" viewBox="0 0 30 34"><path d="M0.500,0 H13 L23.500,10.500 V29 H0.500 Z" fill="#bcd6f2"/><path d="M13,0 L23.500,10.500 H13 Z" fill="#a7c4e6"/><text x="14" y="25.300" font-size="17" font-weight="bold" text-anchor="middle" fill="#ffffff" stroke="#a9cdf0" stroke-width="1.800" paint-order="stroke" stroke-linejoin="round" font-family="Liberation Sans" textLength="26" lengthAdjust="spacingAndGlyphs">qml</text></svg>
<div style="left:197.8px;top:1566px;width:130.2px;height:40px;background:#215b9c;"></div>
<span style="top:1573px;font-size:26px;line-height:26px;color:#fff;white-space:pre;-webkit-text-stroke:0.462px #fff;left:198.5px;transform-origin:0 50%;transform:scaleX(0.923);">Screen01.ui.qml</span>
<svg style="left:160.5px;top:1614.7px;" width="30" height="34" viewBox="0 0 30 34"><path d="M0.500,0 H13 L23.500,10.500 V29 H0.500 Z" fill="#fdfdfd"/><path d="M13,0 L23.500,10.500 H13 Z" fill="#d5d9de"/><text x="14" y="25.300" font-size="17" font-weight="bold" text-anchor="middle" fill="#1b8ca8" stroke="#ffffff" stroke-width="1.800" paint-order="stroke" stroke-linejoin="round" font-family="Liberation Sans" textLength="26" lengthAdjust="spacingAndGlyphs">qml</text></svg>
<span style="top:1617px;font-size:26px;line-height:26px;color:#e6e6e6;white-space:pre;-webkit-text-stroke:0.462px #e6e6e6;left:200.5px;transform-origin:0 50%;transform:scaleX(0.988);">untitled31.qml</span>
<div style="left:746px;top:1256px;width:2px;height:1090px;background:#474747;"></div>
<div style="left:748px;top:1254px;width:324px;height:42px;background:#262728;"></div>
<div style="left:748px;top:1254px;width:324px;height:2px;background:#474747;"></div>
<div style="left:748px;top:1256px;width:178px;height:40px;background:#dcdcdc;"></div>
<div style="left:748px;top:1296px;width:324px;height:4px;background:#dcdcdc;"></div>
<span style="top:1264px;font-size:26px;line-height:26px;color:#000;white-space:pre;-webkit-text-stroke:0.462px #000;left:768.5px;transform-origin:0 50%;transform:scaleX(0.935);">Navigator</span>
<svg style="left:888px;top:1269px;" width="20" height="20" viewBox="0 0 20 20"><path d="M1,1 L19,19 M19,1 L1,19" stroke="#000" stroke-width="2.4" fill="none"/></svg>
<svg style="left:963px;top:1270.5px;" width="27" height="16" viewBox="0 0 27 16"><path d="M1,1.500 L13.500,14 L26,1.500" fill="none" stroke="#d2d2d2" stroke-width="2.400"/></svg>
<svg style="left:1000px;top:1264.5px;" width="29" height="25" viewBox="0 0 29 25"><path d="M15,4.200 H7.500 a6,6 0 0 0 -6,6 V17.500 a6,6 0 0 0 6,6 H16.500 a6,6 0 0 0 6,-6 V13" fill="none" stroke="#d2d2d2" stroke-width="2.400"/><rect x="17.700" y="1.200" width="9.600" height="9" rx="1.500" fill="none" stroke="#d2d2d2" stroke-width="2.400"/></svg>
<svg style="left:1041px;top:1266.3px;" width="21" height="21" viewBox="0 0 21 21"><path d="M1,1 L20,20 M20,1 L1,20" stroke="#d2d2d2" stroke-width="2.4" fill="none"/></svg>
<div style="left:748px;top:1300px;width:324px;height:48px;background:#1a1a1a;"></div>
<div style="left:748px;top:1348px;width:324px;height:978px;background:#262626;"></div>
<svg style="left:761.5px;top:1313px;" width="25" height="22" viewBox="0 0 25 22"><path d="M24,11 H2 M11.500,1.500 L2,11 L11.500,20.500" fill="none" stroke="#bdbdbd" stroke-width="2.400"/></svg>
<svg style="left:809.5px;top:1313px;" width="25" height="22" viewBox="0 0 25 22"><path d="M24,11 H2 M11.500,1.500 L2,11 L11.500,20.500" fill="none" stroke="#bdbdbd" stroke-width="2.400" transform="translate(25,0) scale(-1,1)"/></svg>
<svg style="left:858px;top:1311.5px;" width="22" height="25" viewBox="0 0 22 25"><path d="M11,1 V23 M1.500,13.500 L11,23 L20.500,13.500" fill="none" stroke="#bdbdbd" stroke-width="2.400"/></svg>
<svg style="left:906px;top:1311.5px;" width="22" height="25" viewBox="0 0 22 25"><path d="M11,1 V23 M1.500,13.500 L11,23 L20.500,13.500" fill="none" stroke="#bdbdbd" stroke-width="2.400" transform="translate(0,25) scale(1,-1)"/></svg>
<svg style="left:954px;top:1314px;" width="27" height="23" viewBox="0 0 27 23"><path d="M0,0 H20 V3 L13,10.500 V20 L8,17 V10.500 L0,3 Z" fill="#b0b0b0"/><path d="M17,16 H26 L21.500,21 Z" fill="#b0b0b0"/></svg>
<svg style="left:750px;top:1356.5px;" width="32" height="24" viewBox="0 0 32 24"><rect width="32" height="24" rx="7" fill="#a9a9a9"/></svg>
<span style="top:1358px;font-size:26px;line-height:26px;color:#e6e6e6;white-space:pre;-webkit-text-stroke:0.462px #e6e6e6;left:791.5px;transform-origin:0 50%;transform:scaleX(0.905);">Rectangle</span>
<svg style="left:790px;top:1396px;" width="32" height="31" viewBox="0 0 32 31"><path d="M0,0 H32 V10 H26 V5.500 H20 V27 H26 V31 H6 V27 H12.500 V5.500 H6 V10 H0 Z" fill="#a9a9a9"/></svg>
<span style="top:1402px;font-size:26px;line-height:26px;color:#e6e6e6;white-space:pre;-webkit-text-stroke:0.462px #e6e6e6;left:829.5px;transform-origin:0 50%;transform:scaleX(0.954);">Text</span>
<svg style="left:981.5px;top:1353px;" width="31" height="31" viewBox="0 0 31 31"><path d="M5.500,7 A13.500,13.500 0 1 1 5.500,24" fill="none" stroke="#a9a9a9" stroke-width="2.400"/><path d="M3.500,15.500 L13.500,8.500 V13.300 H26 V17.700 H13.500 V22.500 Z" fill="#a9a9a9"/></svg>
<svg style="left:1034px;top:1359.5px;" width="28" height="18" viewBox="0 0 28 18"><path d="M1,9 C6,2 10,0.800 14,0.800 C18,0.800 22,2 27,9 C22,16 18,17.200 14,17.200 C10,17.200 6,16 1,9 Z" fill="none" stroke="#c4c4c4" stroke-width="1.800"/><circle cx="14" cy="8.500" r="6" fill="#c4c4c4"/></svg>
<svg style="left:981.5px;top:1397px;" width="31" height="31" viewBox="0 0 31 31"><path d="M5.500,7 A13.500,13.500 0 1 1 5.500,24" fill="none" stroke="#a9a9a9" stroke-width="2.400"/><path d="M3.500,15.500 L13.500,8.500 V13.300 H26 V17.700 H13.500 V22.500 Z" fill="#a9a9a9"/></svg>
<svg style="left:1034px;top:1403.5px;" width="28" height="18" viewBox="0 0 28 18"><path d="M1,9 C6,2 10,0.800 14,0.800 C18,0.800 22,2 27,9 C22,16 18,17.200 14,17.200 C10,17.200 6,16 1,9 Z" fill="none" stroke="#c4c4c4" stroke-width="1.800"/><circle cx="14" cy="8.500" r="6" fill="#c4c4c4"/></svg>
<div style="left:748px;top:2326px;width:324px;height:20px;background:#1b1b1b;"></div>
<div style="left:748px;top:2326px;width:218px;height:20px;background:#5b5c5e;"></div>
<div style="left:1072px;top:142px;width:2px;height:2204px;background:#474747;"></div>
<div style="left:1074px;top:142px;width:1744px;height:42px;background:#262728;"></div>
<div style="left:1074px;top:144px;width:200px;height:40px;background:#dcdcdc;"></div>
<div style="left:1074px;top:184px;width:1744px;height:4px;background:#dcdcdc;"></div>
<span style="top:152px;font-size:26px;line-height:26px;color:#000;white-space:pre;-webkit-text-stroke:0.462px #000;left:1094.5px;transform-origin:0 50%;transform:scaleX(0.939);">Form Editor</span>
<svg style="left:1236px;top:157px;" width="20" height="20" viewBox="0 0 20 20"><path d="M1,1 L19,19 M19,1 L1,19" stroke="#000" stroke-width="2.4" fill="none"/></svg>
<svg style="left:2709px;top:158.5px;" width="27" height="16" viewBox="0 0 27 16"><path d="M1,1.500 L13.500,14 L26,1.500" fill="none" stroke="#d2d2d2" stroke-width="2.400"/></svg>
<svg style="left:2746px;top:152.5px;" width="29" height="25" viewBox="0 0 29 25"><path d="M15,4.200 H7.500 a6,6 0 0 0 -6,6 V17.500 a6,6 0 0 0 6,6 H16.500 a6,6 0 0 0 6,-6 V13" fill="none" stroke="#d2d2d2" stroke-width="2.400"/><rect x="17.700" y="1.200" width="9.600" height="9" rx="1.500" fill="none" stroke="#d2d2d2" stroke-width="2.400"/></svg>
<svg style="left:2787px;top:154.3px;" width="21" height="21" viewBox="0 0 21 21"><path d="M1,1 L20,20 M20,1 L1,20" stroke="#d2d2d2" stroke-width="2.4" fill="none"/></svg>
<div style="left:1074px;top:188px;width:1744px;height:47px;background:#1a1a1a;"></div>
<div style="left:1074px;top:235px;width:1724px;height:1653px;background:#262626;"></div>
<svg style="left:1086px;top:200px;" width="28" height="28" viewBox="0 0 28 28"><path d="M1.200,26 V1.200 H26" fill="none" stroke="#b4b4b4" stroke-width="2.200"/><path d="M16.500,9.500 L21,5 L25.500,9.500 Z" fill="#b4b4b4"/><path d="M10,16.500 L5.500,21 L10,25.500 Z" fill="#b4b4b4"/><path d="M14.500,14.500 L25.500,25.500 M25.500,14.500 L14.500,25.500" stroke="#b4b4b4" stroke-width="2" fill="none"/></svg>
<svg style="left:1134px;top:200px;" width="28" height="28" viewBox="0 0 28 28"><path d="M1.200,26 V1.200 H26" fill="none" stroke="#b4b4b4" stroke-width="2.200"/><path d="M16.500,9.500 L21,5 L25.500,9.500 Z" fill="#b4b4b4"/><path d="M10,16.500 L5.500,21 L10,25.500 Z" fill="#b4b4b4"/><path d="M15.500,26 V17.500 a2.500,2.500 0 0 1 2.500,-2.500 h4 a2.500,2.500 0 0 1 2.500,2.500 V26 M15.500,21.500 H24.500" stroke="#b4b4b4" stroke-width="2.200" fill="none"/></svg>
<div style="left:1172px;top:190px;width:48px;height:43px;background:#111111;"></div>
<svg style="left:1182px;top:200px;" width="28" height="28" viewBox="0 0 28 28"><path d="M1.200,26 V1.200 H26" fill="none" stroke="#b4b4b4" stroke-width="2.200"/><path d="M16.500,9.500 L21,5 L25.500,9.500 Z" fill="#b4b4b4"/><path d="M10,16.500 L5.500,21 L10,25.500 Z" fill="#b4b4b4"/><rect x="14.500" y="14" width="11.500" height="12" fill="#b4b4b4"/></svg>
<div style="left:1226px;top:198px;width:2px;height:29px;background:#5a5a5a;"></div>
<svg style="left:1242px;top:202px;" width="27" height="23" viewBox="0 0 27 23"><rect x="1.200" y="1.200" width="24.600" height="20.600" fill="none" stroke="#b4b4b4" stroke-width="2.400" stroke-dasharray="2.400 1.850"/><rect x="5.800" y="5.800" width="15.400" height="11.400" fill="none" stroke="#b4b4b4" stroke-width="2.400"/></svg>
<div style="left:1286px;top:198px;width:2px;height:29px;background:#5a5a5a;"></div>
<div style="left:1292px;top:190px;width:400px;height:44px;background:#26272a;"></div>
<span style="top:205px;font-size:18px;line-height:18px;color:#7f7f7f;white-space:pre;-webkit-text-stroke:0.32px #7f7f7f;left:1298px;transform-origin:0 50%;transform:scaleX(0.941);">Override Width</span>
<span style="top:205px;font-size:18px;line-height:18px;color:#7f7f7f;white-space:pre;-webkit-text-stroke:0.32px #7f7f7f;left:1498px;transform-origin:0 50%;transform:scaleX(0.936);">Override Height</span>
<svg style="left:2388px;top:200px;" width="24" height="24" viewBox="0 0 24 24"><rect width="24" height="24" fill="#000"/><rect x="4" y="4" width="8" height="8" fill="#fff"/><rect x="12" y="12" width="8" height="8" fill="#fff"/></svg>
<svg style="left:2432px;top:203.2px;" width="14" height="19.6" viewBox="0 0 14 19.6"><path d="M0,8 L7.0,0 L14,8 Z M0,11.6 L7.0,19.6 L14,11.6 Z" fill="#a8a8a8"/></svg>
<svg style="left:2464px;top:196px;" width="33" height="33" viewBox="0 0 33 33"><circle cx="20.500" cy="12.500" r="11" fill="none" stroke="#c6c6c6" stroke-width="2.400"/><path d="M12.500,20.500 L1.500,31.500" stroke="#c6c6c6" stroke-width="3" fill="none"/><path d="M15,12.500 H26 M20.500,7 V18" stroke="#c6c6c6" stroke-width="2.600" fill="none"/></svg>
<svg style="left:2512px;top:196px;" width="33" height="33" viewBox="0 0 33 33"><circle cx="20.500" cy="12.500" r="11" fill="none" stroke="#c6c6c6" stroke-width="2.400"/><path d="M12.500,20.500 L1.500,31.500" stroke="#c6c6c6" stroke-width="3" fill="none"/><path d="M15,12.500 H26" stroke="#c6c6c6" stroke-width="2.600" fill="none"/></svg>
<span style="top:201px;font-size:26px;line-height:26px;color:#dedede;white-space:pre;-webkit-text-stroke:0.462px #dedede;left:2562px;transform-origin:0 50%;transform:scaleX(0.827);">50 %</span>
<svg style="left:2647px;top:203.2px;" width="14" height="19.6" viewBox="0 0 14 19.6"><path d="M0,8 L7.0,0 L14,8 Z M0,11.6 L7.0,19.6 L14,11.6 Z" fill="#a8a8a8"/></svg>
<svg style="left:2680px;top:196px;" width="33" height="33" viewBox="0 0 33 33"><circle cx="20.500" cy="12.500" r="11" fill="none" stroke="#c6c6c6" stroke-width="2.400"/><path d="M12.500,20.500 L1.500,31.500" stroke="#c6c6c6" stroke-width="3" fill="none"/><path d="M16,8 L25,17 M25,8 L16,17" stroke="#c6c6c6" stroke-width="2.200" fill="none"/><path d="M14.500,6.500 H18.500 L14.500,10.500 Z M26.500,6.500 V10.500 L22.500,6.500 Z M14.500,18.500 V14.500 L18.500,18.500 Z M26.500,18.500 H22.500 L26.500,14.500 Z" fill="#c6c6c6"/></svg>
<svg style="left:2728px;top:196px;" width="33" height="33" viewBox="0 0 33 33"><circle cx="20.500" cy="12.500" r="11" fill="none" stroke="#555555" stroke-width="2.400"/><path d="M12.500,20.500 L1.500,31.500" stroke="#555555" stroke-width="3" fill="none"/><path d="M15,10 V7 H18 M23,7 H26 V10 M26,15 V18 H23 M18,18 H15 V15" stroke="#555" stroke-width="2.200" fill="none"/></svg>
<svg style="left:2781px;top:201px;" width="23" height="23" viewBox="0 0 23 23"><path d="M4.800,6.800 A8.600,8.600 0 1 1 3.200,15" fill="none" stroke="#c0c0c0" stroke-width="2.200" transform="translate(0.800,0.800)"/><path d="M1,1.500 L2.600,10.800 L11,7.200 Z" fill="#c0c0c0"/></svg>
<div style="left:2798px;top:235px;width:20px;height:1653px;background:#1b1b1b;"></div>
<div style="left:2798px;top:1003px;width:20px;height:271px;background:#5b5c5e;"></div>
<div style="left:1074px;top:1888px;width:1724px;height:20px;background:#1b1b1b;"></div>
<div style="left:1908px;top:1888px;width:293px;height:20px;background:#5b5c5e;"></div>
<div style="left:2798px;top:1888px;width:20px;height:20px;background:#242424;"></div>
<div style="left:1247px;top:597px;width:1282px;height:722px;background:#0b0b0b;"></div>
<div style="left:1248px;top:598px;width:1280px;height:720px;background:#ffffff;"></div>
<span style="top:950.5px;font-size:13px;line-height:13px;color:#000;white-space:pre;left:1822.191px;width:129.617px;text-align:center;transform-origin:50% 50%;transform:scaleX(0.993);">Hello untitled31</span>
<div style="left:1074px;top:1908px;width:1744px;height:2px;background:#474747;"></div>
<div style="left:1074px;top:1908px;width:1544px;height:42px;background:#262728;"></div>
<div style="left:1074px;top:1908px;width:1544px;height:2px;background:#474747;"></div>
<div style="left:1074px;top:1910px;width:164px;height:40px;background:#dcdcdc;"></div>
<div style="left:1074px;top:1950px;width:1544px;height:4px;background:#dcdcdc;"></div>
<span style="top:1918px;font-size:26px;line-height:26px;color:#000;white-space:pre;-webkit-text-stroke:0.462px #000;left:1094.5px;transform-origin:0 50%;transform:scaleX(0.925);">Timeline</span>
<svg style="left:1200px;top:1923px;" width="20" height="20" viewBox="0 0 20 20"><path d="M1,1 L19,19 M19,1 L1,19" stroke="#000" stroke-width="2.4" fill="none"/></svg>
<svg style="left:2509px;top:1924.5px;" width="27" height="16" viewBox="0 0 27 16"><path d="M1,1.500 L13.500,14 L26,1.500" fill="none" stroke="#d2d2d2" stroke-width="2.400"/></svg>
<svg style="left:2546px;top:1918.5px;" width="29" height="25" viewBox="0 0 29 25"><path d="M15,4.200 H7.500 a6,6 0 0 0 -6,6 V17.500 a6,6 0 0 0 6,6 H16.500 a6,6 0 0 0 6,-6 V13" fill="none" stroke="#d2d2d2" stroke-width="2.400"/><rect x="17.700" y="1.200" width="9.600" height="9" rx="1.500" fill="none" stroke="#d2d2d2" stroke-width="2.400"/></svg>
<svg style="left:2587px;top:1920.3px;" width="21" height="21" viewBox="0 0 21 21"><path d="M1,1 L20,20 M20,1 L1,20" stroke="#d2d2d2" stroke-width="2.4" fill="none"/></svg>
<div style="left:1074px;top:1954px;width:1544px;height:392px;background:#262626;"></div>
<svg style="left:1093px;top:1973px;" width="26" height="26" viewBox="0 0 26 26"><path d="M10,0 H16 V10 H26 V16 H16 V26 H10 V16 H0 V10 H10 Z" fill="#c2c2c2"/></svg>
<span style="top:2079px;font-size:26px;line-height:26px;color:#e6e6e6;white-space:pre;-webkit-text-stroke:0.462px #e6e6e6;left:1618.826px;width:453.348px;text-align:center;transform-origin:50% 50%;transform:scaleX(0.944);">This file does not contain a timeline.</span>
<span style="top:2159px;font-size:26px;line-height:26px;color:#e6e6e6;white-space:pre;-webkit-text-stroke:0.462px #e6e6e6;left:1465.971px;width:759.059px;text-align:center;transform-origin:50% 50%;transform:scaleX(0.942);">To create an animation, add a timeline by clicking the + button.</span>
<span style="top:2199px;font-size:26px;line-height:26px;color:#e6e6e6;white-space:pre;-webkit-text-stroke:0.462px #e6e6e6;left:1617.689px;width:418.621px;text-align:center;transform-origin:50% 50%;transform:scaleX(0.956);">To edit the timeline settings, click</span>
<svg style="left:2016px;top:2199px;" width="29" height="27" viewBox="0 0 29 27"><g fill="none" stroke="#d6d6d6" stroke-width="2.400"><rect x="1.200" y="1.200" width="26.600" height="24.600" rx="2.500"/><path d="M7.500,1 V26 M21.500,1 V26 M7.500,13.500 H21.500 M1,7.500 H7.500 M1,13.500 H7.500 M1,19.500 H7.500 M21.500,7.500 H28 M21.500,13.500 H28 M21.500,19.500 H28"/></g></svg>
<span style="top:2294px;font-size:26px;line-height:26px;color:#e6e6e6;white-space:pre;-webkit-text-stroke:0.462px #e6e6e6;left:1079px;transform-origin:0 50%;transform:scaleX(0.937);">Playhead frame 0</span>
<div style="left:2618px;top:1910px;width:2px;height:436px;background:#474747;"></div>
<div style="left:2620px;top:1908px;width:198px;height:42px;background:#262728;"></div>
<div style="left:2620px;top:1908px;width:198px;height:2px;background:#474747;"></div>
<div style="left:2620px;top:1910px;width:84px;height:40px;background:#dcdcdc;"></div>
<div style="left:2620px;top:1950px;width:198px;height:4px;background:#dcdcdc;"></div>
<span style="top:1918px;font-size:26px;line-height:26px;color:#000;white-space:pre;-webkit-text-stroke:0.462px #000;left:2640.5px;transform-origin:0 50%;transform:scaleX(0.865);">St...</span>
<svg style="left:2709px;top:1924.5px;" width="27" height="16" viewBox="0 0 27 16"><path d="M1,1.500 L13.500,14 L26,1.500" fill="none" stroke="#d2d2d2" stroke-width="2.400"/></svg>
<svg style="left:2746px;top:1918.5px;" width="29" height="25" viewBox="0 0 29 25"><path d="M15,4.200 H7.500 a6,6 0 0 0 -6,6 V17.500 a6,6 0 0 0 6,6 H16.500 a6,6 0 0 0 6,-6 V13" fill="none" stroke="#d2d2d2" stroke-width="2.400"/><rect x="17.700" y="1.200" width="9.600" height="9" rx="1.500" fill="none" stroke="#d2d2d2" stroke-width="2.400"/></svg>
<svg style="left:2787px;top:1920.3px;" width="21" height="21" viewBox="0 0 21 21"><path d="M1,1 L20,20 M20,1 L1,20" stroke="#d2d2d2" stroke-width="2.4" fill="none"/></svg>
<svg style="left:2695px;top:1923px;" width="9" height="20" viewBox="0 0 9 22"><path d="M1,1 L11,11 L1,21" stroke="#000" stroke-width="2.400" fill="none"/></svg>
<div style="left:2620px;top:1954px;width:198px;height:392px;background:#262626;"></div>
<div style="left:2798px;top:1954px;width:20px;height:392px;background:#1b1b1b;"></div>
<div style="left:2798px;top:1954px;width:20px;height:379px;background:#5b5c5e;"></div>
<div style="left:2620px;top:2059px;width:160px;height:169px;border:1.500px solid #3d3d3d;border-left:none;"></div>
<svg style="left:2683px;top:2132px;" width="24" height="24" viewBox="0 0 24 24"><path d="M10.500,0 H13.500 V10.500 H24 V13.500 H13.500 V24 H10.500 V13.500 H0 V10.500 H10.500 Z" fill="#c2c2c2"/></svg>
<div style="left:2818px;top:142px;width:2px;height:2204px;background:#474747;"></div>
<div style="left:2820px;top:142px;width:1020px;height:42px;background:#262728;"></div>
<div style="left:2820px;top:144px;width:186px;height:40px;background:#dcdcdc;"></div>
<div style="left:2820px;top:184px;width:1020px;height:4px;background:#dcdcdc;"></div>
<span style="top:152px;font-size:26px;line-height:26px;color:#000;white-space:pre;-webkit-text-stroke:0.462px #000;left:2840.5px;transform-origin:0 50%;transform:scaleX(0.945);">Properties</span>
<svg style="left:2968px;top:157px;" width="20" height="20" viewBox="0 0 20 20"><path d="M1,1 L19,19 M19,1 L1,19" stroke="#000" stroke-width="2.4" fill="none"/></svg>
<svg style="left:3731px;top:158.5px;" width="27" height="16" viewBox="0 0 27 16"><path d="M1,1.500 L13.500,14 L26,1.500" fill="none" stroke="#d2d2d2" stroke-width="2.400"/></svg>
<svg style="left:3768px;top:152.5px;" width="29" height="25" viewBox="0 0 29 25"><path d="M15,4.200 H7.500 a6,6 0 0 0 -6,6 V17.500 a6,6 0 0 0 6,6 H16.500 a6,6 0 0 0 6,-6 V13" fill="none" stroke="#d2d2d2" stroke-width="2.400"/><rect x="17.700" y="1.200" width="9.600" height="9" rx="1.500" fill="none" stroke="#d2d2d2" stroke-width="2.400"/></svg>
<svg style="left:3809px;top:154.3px;" width="21" height="21" viewBox="0 0 21 21"><path d="M1,1 L20,20 M20,1 L1,20" stroke="#d2d2d2" stroke-width="2.4" fill="none"/></svg>
<div style="left:2820px;top:188px;width:1020px;height:38px;background:#1a1a1a;"></div>
<svg style="left:2828px;top:201px;" width="16" height="8.5" viewBox="0 0 16 8.5"><path d="M0,0 H16 L8,8.500 Z" fill="#b0b0b0"/></svg>
<div style="left:2820px;top:226px;width:1020px;height:2120px;background:#262626;"></div>
<span style="top:241px;font-size:26px;line-height:26px;color:#e6e6e6;white-space:pre;-webkit-text-stroke:0.462px #e6e6e6;left:2837px;transform-origin:0 50%;transform:scaleX(0.949);">None or multiple items selected.</span>
<div style="left:78px;top:2346px;width:3762px;height:2px;background:#262728;"></div>
<div style="left:78px;top:2348px;width:3762px;height:51px;background:#1a1a1a;border-radius:0 0 9px 0;"></div>
<svg style="left:94px;top:2364px;" width="22" height="22" viewBox="0 0 22 22"><rect x="1" y="1" width="20" height="20" fill="none" stroke="#9a9a9a" stroke-width="2"/><rect x="1" y="1" width="9" height="20" fill="#9a9a9a"/></svg>
<div style="left:142px;top:2353px;width:412px;height:43px;background:#26272a;"></div>
<svg style="left:154px;top:2362px;" width="31" height="28" viewBox="0 0 31 28"><circle cx="17" cy="10" r="8.500" fill="none" stroke="#a0a0a0" stroke-width="2.600"/><path d="M11,16 L1.500,25.500" stroke="#a0a0a0" stroke-width="3.400" fill="none"/><path d="M22,22 H30 L26,26.500 Z" fill="#a0a0a0"/></svg>
<span style="top:2364px;font-size:26px;line-height:26px;color:#8c8c8c;white-space:pre;-webkit-text-stroke:0.462px #8c8c8c;left:196px;transform-origin:0 50%;transform:scaleX(0.918);">Type to locate (⌘K)</span>
<div style="left:559.5px;top:2353px;width:2px;height:43px;background:#5a5a5a;"></div>
<span style="top:2364px;font-size:26px;line-height:26px;color:#e6e6e6;white-space:pre;-webkit-text-stroke:0.462px #e6e6e6;left:582px;transform-origin:0 50%;transform:scaleX(0.9);">1</span>
<span style="top:2364px;font-size:26px;line-height:26px;color:#e6e6e6;white-space:pre;-webkit-text-stroke:0.462px #e6e6e6;left:608px;transform-origin:0 50%;transform:scaleX(0.905);">Issues</span>
<span style="top:2364px;font-size:26px;line-height:26px;color:#e6e6e6;white-space:pre;-webkit-text-stroke:0.462px #e6e6e6;left:713px;transform-origin:0 50%;transform:scaleX(0.9);">2</span>
<span style="top:2364px;font-size:26px;line-height:26px;color:#e6e6e6;white-space:pre;-webkit-text-stroke:0.462px #e6e6e6;left:740px;transform-origin:0 50%;transform:scaleX(0.913);">Search Results</span>
<span style="top:2364px;font-size:26px;line-height:26px;color:#e6e6e6;white-space:pre;-webkit-text-stroke:0.462px #e6e6e6;left:936px;transform-origin:0 50%;transform:scaleX(0.9);">3</span>
<span style="top:2364px;font-size:26px;line-height:26px;color:#e6e6e6;white-space:pre;-webkit-text-stroke:0.462px #e6e6e6;left:964.5px;transform-origin:0 50%;transform:scaleX(0.953);">Application Output</span>
<span style="top:2364px;font-size:26px;line-height:26px;color:#e6e6e6;white-space:pre;-webkit-text-stroke:0.462px #e6e6e6;left:1202px;transform-origin:0 50%;transform:scaleX(0.9);">5</span>
<span style="top:2364px;font-size:26px;line-height:26px;color:#e6e6e6;white-space:pre;-webkit-text-stroke:0.462px #e6e6e6;left:1230px;transform-origin:0 50%;transform:scaleX(0.909);">QML Debugger Console</span>
<span style="top:2364px;font-size:26px;line-height:26px;color:#e6e6e6;white-space:pre;-webkit-text-stroke:0.462px #e6e6e6;left:1520px;transform-origin:0 50%;transform:scaleX(0.9);">6</span>
<span style="top:2364px;font-size:26px;line-height:26px;color:#e6e6e6;white-space:pre;-webkit-text-stroke:0.462px #e6e6e6;left:1548px;transform-origin:0 50%;transform:scaleX(0.914);">General Messages</span>
<span style="top:2364px;font-size:26px;line-height:26px;color:#e6e6e6;white-space:pre;-webkit-text-stroke:0.462px #e6e6e6;left:1785px;transform-origin:0 50%;transform:scaleX(0.9);">7</span>
<span style="top:2364px;font-size:26px;line-height:26px;color:#e6e6e6;white-space:pre;-webkit-text-stroke:0.462px #e6e6e6;left:1812px;transform-origin:0 50%;transform:scaleX(0.934);">Version Control</span>
<svg style="left:2019px;top:2368px;" width="12" height="18" viewBox="0 0 12 18"><path d="M0,7 L6.0,0 L12,7 Z M0,11 L6.0,18 L12,11 Z" fill="#b0b0b0"/></svg>
<div style="left:3730px;top:2355px;width:48px;height:43px;background:#26272a;"></div>
<svg style="left:3740px;top:2359px;" width="30" height="30" viewBox="0 0 30 30"><path d="M18.500,6 L22.500,1.500 L26.500,6 Z" fill="#c8c8c8"/><rect x="1.500" y="17" width="26" height="7" rx="3.500" fill="none" stroke="#d8d8d8" stroke-width="2.400"/></svg>
<svg style="left:3805px;top:2364px;" width="22" height="22" viewBox="0 0 22 22"><rect x="1" y="1" width="20" height="20" fill="none" stroke="#9a9a9a" stroke-width="2"/><rect x="12" y="1" width="9" height="20" fill="#9a9a9a"/></svg>
<svg style="left:340px;top:1590px;" width="1050" height="40" viewBox="0 0 1050 40"><path d="M33,20.200 L1041,23.500" stroke="#e6462e" stroke-width="5.500" fill="none"/><path d="M10,20 L35,8 V32.500 Z" fill="#e6462e"/></svg>
<span style="top:1582.5px;font-size:60px;line-height:60px;color:#ea5545;white-space:pre;-webkit-text-stroke:0.4px #ea5545;left:1457px;transform-origin:0 50%;">renaming this will change the file type to .qml</span>
</body></html>
